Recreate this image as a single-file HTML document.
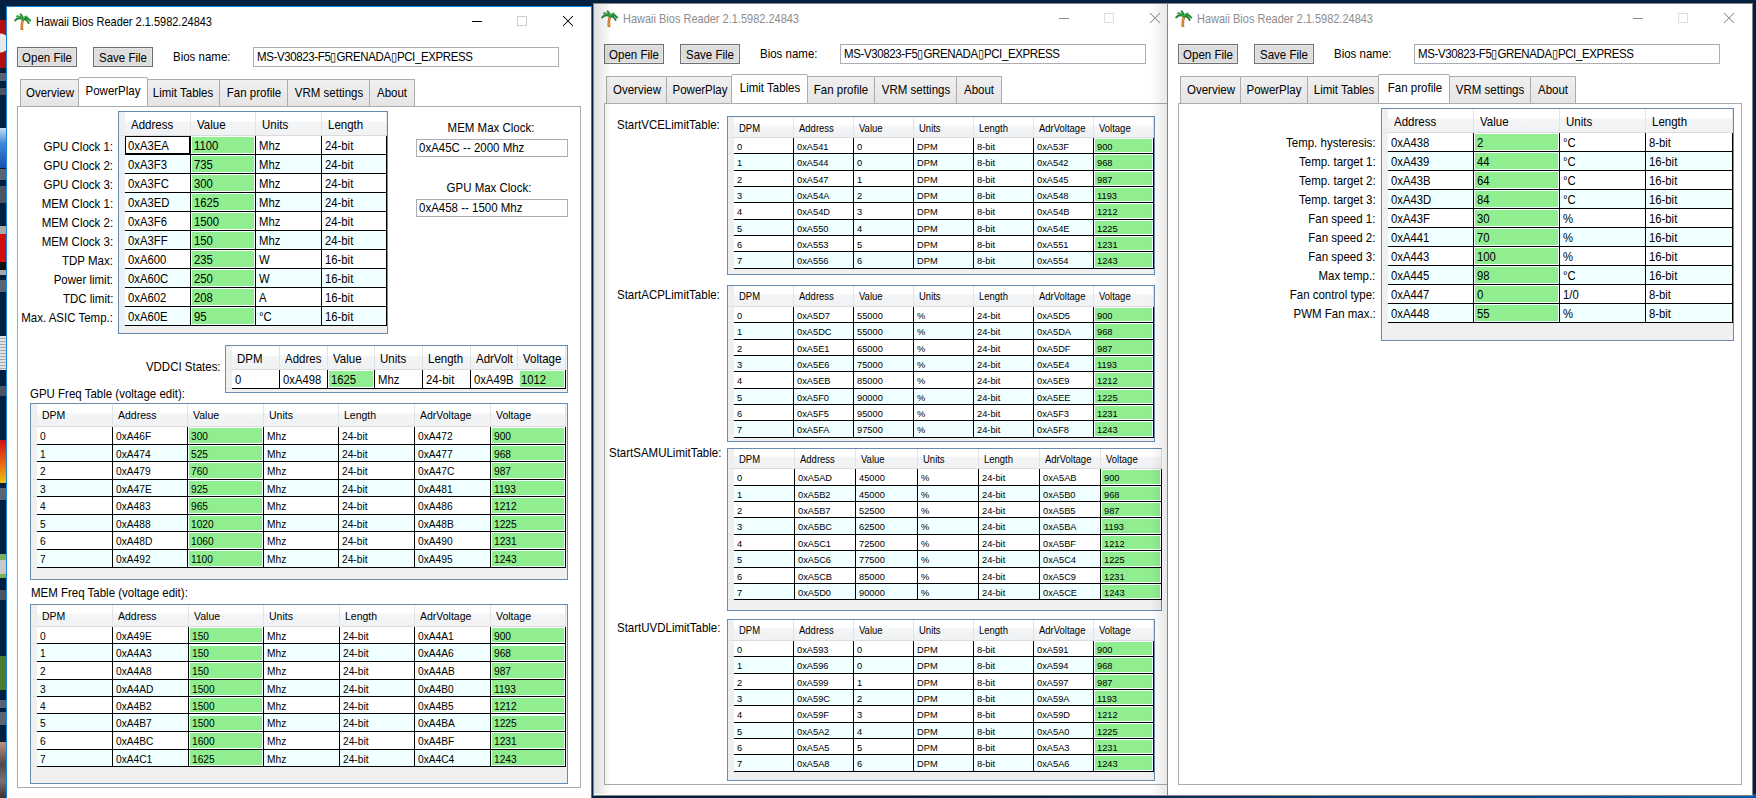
<!DOCTYPE html><html><head><meta charset="utf-8"><style>
html,body{margin:0;padding:0;width:1756px;height:798px;overflow:hidden;background:#0A1A33}
body{position:relative;font-family:"Liberation Sans",sans-serif}
div{position:absolute}
.t{white-space:pre;line-height:1.15;color:#000}
</style></head><body>
<div style="left:0;top:0;width:1756px;height:798px;background:#03203F"></div>
<div style="left:0;top:794px;width:1756px;height:4px;background:linear-gradient(90deg,#031A33 0%,#04244A 60%,#0A5AA8 100%)"></div>
<div style="left:0;top:20px;width:6px;height:48px;background:#B01010"></div>
<div style="left:0;top:30px;width:6px;height:26px;background:radial-gradient(circle at 0 50%,#E8E8E8 0,#E8E8E8 9px,#B01010 10px)"></div>
<div style="left:0;top:73px;width:6px;height:8px;background:#5A6472"></div>
<div style="left:0;top:88px;width:6px;height:7px;background:#4A5462"></div>
<div style="left:0;top:128px;width:6px;height:40px;background:linear-gradient(#C8DDF0,#3F86D8 40%,#1A4FB0)"></div>
<div style="left:0;top:169px;width:6px;height:11px;background:#5A6472"></div>
<div style="left:0;top:186px;width:6px;height:17px;background:#4A5462"></div>
<div style="left:0;top:226px;width:6px;height:49px;background:#A8A8A8"></div>
<div style="left:0;top:234px;width:6px;height:28px;background:#D01010"></div>
<div style="left:0;top:262px;width:6px;height:8px;background:#101010"></div>
<div style="left:0;top:280px;width:6px;height:12px;background:#5A6472"></div>
<div style="left:0;top:336px;width:6px;height:34px;background:repeating-linear-gradient(#E0E0E0 0px,#E0E0E0 2px,#A8A8A8 2px,#A8A8A8 3px)"></div>
<div style="left:0;top:386px;width:6px;height:10px;background:#4A5462"></div>
<div style="left:0;top:440px;width:6px;height:43px;background:linear-gradient(#D01010,#E86010 50%,#F0C010)"></div>
<div style="left:0;top:488px;width:6px;height:12px;background:#5A6472"></div>
<div style="left:0;top:554px;width:6px;height:24px;background:#7CB060"></div>
<div style="left:0;top:560px;width:6px;height:14px;background:#C8C8C8"></div>
<div style="left:0;top:590px;width:6px;height:10px;background:#4A5462"></div>
<div style="left:0;top:656px;width:6px;height:34px;background:#4C7A30"></div>
<div style="left:0;top:700px;width:6px;height:8px;background:#5A6472"></div>
<div style="left:0;top:712px;width:6px;height:13px;background:#5A6472"></div>
<div style="left:0;top:742px;width:6px;height:56px;background:linear-gradient(#C09080,#504848 40%,#7A7070 70%,#3A3030)"></div>
<div style="left:593px;top:3px;width:586px;height:793px;background:#fff;border:1px solid #858585;box-sizing:border-box"></div>
<div style="left:601px;top:10px;width:18px;height:18px"><svg style="display:block" width="18" height="18" viewBox="0 0 18 18"><path d="M7.6 7 C6.6 9.8 6.3 13.2 6.6 17 L9.4 17 C8.9 13.5 9 10 10.3 7 Z" fill="#C9641A"/><path d="M8.6 7.6 C7.9 10.3 7.7 13.5 7.9 16.6" stroke="#F2A646" stroke-width="1" fill="none"/><g fill="none" stroke-linecap="round"><path d="M8.8 6.2 Q4 3.6 1.3 7.4" stroke="#1F8A34" stroke-width="2"/><path d="M8.6 5.8 Q5.5 2.4 2.8 3.3" stroke="#3DA64E" stroke-width="1.8"/><path d="M8.9 6 Q8.3 2.6 6.6 1.3" stroke="#228C36" stroke-width="1.9"/><path d="M9 6 Q12.6 3.2 16.2 7.6" stroke="#1F8A34" stroke-width="2"/><path d="M9.2 6.4 Q13 6 14.6 10" stroke="#1A7F2E" stroke-width="1.9"/><path d="M9 6 Q11 3 13 3.4" stroke="#45AE55" stroke-width="1.5"/></g></svg></div>
<div class="t" style="left:623.4px;top:11.67px;font-size:12.4px;color:#8C8C8C;transform:scaleX(0.887);transform-origin:0 0;">Hawaii Bios Reader 2.1.5982.24843</div>
<div style="left:1059px;top:18px;width:10px;height:1px;background:#8C8C8C"></div>
<div style="left:1104px;top:13px;width:10px;height:10px;border:1px solid #DDDDDD;box-sizing:border-box"></div>
<div style="left:1149px;top:12px;width:12px;height:12px"><svg style="display:block" width="12" height="12" viewBox="0 0 12 12"><path d="M1 1 L11 11 M11 1 L1 11" stroke="#8C8C8C" stroke-width="1.05" fill="none"/></svg></div>
<div style="left:604px;top:44px;width:60px;height:20px;background:#DDDDDD;border:1px solid #707070;box-sizing:border-box;box-shadow:inset 0 0 0 1px #E6E6E6"></div>
<div class="t" style="left:484.0px;width:300px;top:47.87px;font-size:12.4px;color:#000;text-align:center;transform:scaleX(0.927);transform-origin:50% 0">Open File</div>
<div style="left:680px;top:44px;width:60px;height:20px;background:#DDDDDD;border:1px solid #707070;box-sizing:border-box;box-shadow:inset 0 0 0 1px #E6E6E6"></div>
<div class="t" style="left:560.0px;width:300px;top:47.87px;font-size:12.4px;color:#000;text-align:center;transform:scaleX(0.927);transform-origin:50% 0">Save File</div>
<div class="t" style="left:759.6px;top:46.67px;font-size:12.4px;color:#000;transform:scaleX(0.927);transform-origin:0 0;">Bios name:</div>
<div style="left:840px;top:44px;width:306px;height:20px;border:1px solid #ABADB3;box-sizing:border-box;background:#fff"></div>
<div class="t" style="left:843.6px;top:46.67px;font-size:12.4px;color:#000;transform:scaleX(0.927);transform-origin:0 0;letter-spacing:-0.4px">MS-V30823-F5▯GRENADA▯PCI_EXPRESS</div>
<div style="left:604px;top:103px;width:564px;height:682px;border:1px solid #ACACAC;box-sizing:border-box;background:#fff"></div>
<div style="left:606px;top:76px;width:62px;height:28px;background:linear-gradient(#F0F0F0,#E5E5E5);border:1px solid #ACACAC;box-sizing:border-box"></div>
<div class="t" style="left:487.0px;width:300px;top:82.87px;font-size:12.4px;color:#000;text-align:center;transform:scaleX(0.927);transform-origin:50% 0">Overview</div>
<div style="left:666px;top:76px;width:68px;height:28px;background:linear-gradient(#F0F0F0,#E5E5E5);border:1px solid #ACACAC;box-sizing:border-box"></div>
<div class="t" style="left:550.2px;width:300px;top:82.87px;font-size:12.4px;color:#000;text-align:center;transform:scaleX(0.927);transform-origin:50% 0">PowerPlay</div>
<div style="left:806px;top:76px;width:69px;height:28px;background:linear-gradient(#F0F0F0,#E5E5E5);border:1px solid #ACACAC;box-sizing:border-box"></div>
<div class="t" style="left:690.5px;width:300px;top:82.87px;font-size:12.4px;color:#000;text-align:center;transform:scaleX(0.927);transform-origin:50% 0">Fan profile</div>
<div style="left:874px;top:76px;width:83px;height:28px;background:linear-gradient(#F0F0F0,#E5E5E5);border:1px solid #ACACAC;box-sizing:border-box"></div>
<div class="t" style="left:765.5px;width:300px;top:82.87px;font-size:12.4px;color:#000;text-align:center;transform:scaleX(0.927);transform-origin:50% 0">VRM settings</div>
<div style="left:956px;top:76px;width:46px;height:28px;background:linear-gradient(#F0F0F0,#E5E5E5);border:1px solid #ACACAC;box-sizing:border-box"></div>
<div class="t" style="left:829.0px;width:300px;top:82.87px;font-size:12.4px;color:#000;text-align:center;transform:scaleX(0.927);transform-origin:50% 0">About</div>
<div style="left:731px;top:74px;width:77px;height:30px;background:#fff;border:1px solid #ACACAC;border-radius:2px 2px 0 0;box-sizing:border-box"></div>
<div class="t" style="left:620.0px;width:300px;top:80.87px;font-size:12.4px;color:#000;text-align:center;transform:scaleX(0.927);transform-origin:50% 0">Limit Tables</div>
<div class="t" style="left:616.9px;top:117.77px;font-size:12.4px;color:#000;transform:scaleX(0.927);transform-origin:0 0;">StartVCELimitTable:</div>
<div style="left:727px;top:116px;width:428px;height:159px;border:1px solid #688CAF;box-sizing:border-box;background:#F0F0F0"></div>
<div style="left:728px;top:118px;width:6px;height:20px;background:#EFEFEF;border-bottom:1px solid #E4E4E4;box-sizing:border-box"></div>
<div style="left:734px;top:118px;width:60px;height:20px;background:linear-gradient(#FFFFFF 0%,#FFFFFF 38%,#F4F5F7 44%,#F0F1F3 100%);border-right:1px solid #E2E3E5;border-bottom:1px solid #DADBDD;box-sizing:border-box;overflow:hidden"></div>
<div style="left:794px;top:118px;width:60px;height:20px;background:linear-gradient(#FFFFFF 0%,#FFFFFF 38%,#F4F5F7 44%,#F0F1F3 100%);border-right:1px solid #E2E3E5;border-bottom:1px solid #DADBDD;box-sizing:border-box;overflow:hidden"></div>
<div style="left:854px;top:118px;width:60px;height:20px;background:linear-gradient(#FFFFFF 0%,#FFFFFF 38%,#F4F5F7 44%,#F0F1F3 100%);border-right:1px solid #E2E3E5;border-bottom:1px solid #DADBDD;box-sizing:border-box;overflow:hidden"></div>
<div style="left:914px;top:118px;width:60px;height:20px;background:linear-gradient(#FFFFFF 0%,#FFFFFF 38%,#F4F5F7 44%,#F0F1F3 100%);border-right:1px solid #E2E3E5;border-bottom:1px solid #DADBDD;box-sizing:border-box;overflow:hidden"></div>
<div style="left:974px;top:118px;width:60px;height:20px;background:linear-gradient(#FFFFFF 0%,#FFFFFF 38%,#F4F5F7 44%,#F0F1F3 100%);border-right:1px solid #E2E3E5;border-bottom:1px solid #DADBDD;box-sizing:border-box;overflow:hidden"></div>
<div style="left:1034px;top:118px;width:60px;height:20px;background:linear-gradient(#FFFFFF 0%,#FFFFFF 38%,#F4F5F7 44%,#F0F1F3 100%);border-right:1px solid #E2E3E5;border-bottom:1px solid #DADBDD;box-sizing:border-box;overflow:hidden"></div>
<div style="left:1094px;top:118px;width:60px;height:20px;background:linear-gradient(#FFFFFF 0%,#FFFFFF 38%,#F4F5F7 44%,#F0F1F3 100%);border-right:1px solid #E2E3E5;border-bottom:1px solid #DADBDD;box-sizing:border-box;overflow:hidden"></div>
<div style="left:734px;top:118px;width:59px;height:20px;overflow:hidden">
<div class="t" style="left:5px;top:4.59px;font-size:10.1px;transform:scaleX(0.94);transform-origin:0 0">DPM</div></div>
<div style="left:794px;top:118px;width:59px;height:20px;overflow:hidden">
<div class="t" style="left:5px;top:4.59px;font-size:10.1px;transform:scaleX(0.94);transform-origin:0 0">Address</div></div>
<div style="left:854px;top:118px;width:59px;height:20px;overflow:hidden">
<div class="t" style="left:5px;top:4.59px;font-size:10.1px;transform:scaleX(0.94);transform-origin:0 0">Value</div></div>
<div style="left:914px;top:118px;width:59px;height:20px;overflow:hidden">
<div class="t" style="left:5px;top:4.59px;font-size:10.1px;transform:scaleX(0.94);transform-origin:0 0">Units</div></div>
<div style="left:974px;top:118px;width:59px;height:20px;overflow:hidden">
<div class="t" style="left:5px;top:4.59px;font-size:10.1px;transform:scaleX(0.94);transform-origin:0 0">Length</div></div>
<div style="left:1034px;top:118px;width:59px;height:20px;overflow:hidden">
<div class="t" style="left:5px;top:4.59px;font-size:10.1px;transform:scaleX(0.94);transform-origin:0 0">AdrVoltage</div></div>
<div style="left:1094px;top:118px;width:59px;height:20px;overflow:hidden">
<div class="t" style="left:5px;top:4.59px;font-size:10.1px;transform:scaleX(0.94);transform-origin:0 0">Voltage</div></div>
<div style="left:728px;top:138px;width:6px;height:16px;background:#F0F0F0;border-bottom:1px solid #E4E4E4;box-sizing:border-box"></div>
<div style="left:734px;top:138px;width:420px;height:16px;background:#FFFFFF;border-bottom:1px solid #000;box-sizing:border-box"></div>
<div style="left:793px;top:138px;width:1px;height:16px;background:#000"></div>
<div class="t" style="left:737px;top:141.07px;font-size:9.9px;transform:scaleX(0.94);transform-origin:0 0">0</div>
<div style="left:853px;top:138px;width:1px;height:16px;background:#000"></div>
<div class="t" style="left:797px;top:141.07px;font-size:9.9px;transform:scaleX(0.94);transform-origin:0 0">0xA541</div>
<div style="left:913px;top:138px;width:1px;height:16px;background:#000"></div>
<div class="t" style="left:857px;top:141.07px;font-size:9.9px;transform:scaleX(0.94);transform-origin:0 0">0</div>
<div style="left:973px;top:138px;width:1px;height:16px;background:#000"></div>
<div class="t" style="left:917px;top:141.07px;font-size:9.9px;transform:scaleX(0.94);transform-origin:0 0">DPM</div>
<div style="left:1033px;top:138px;width:1px;height:16px;background:#000"></div>
<div class="t" style="left:977px;top:141.07px;font-size:9.9px;transform:scaleX(0.94);transform-origin:0 0">8-bit</div>
<div style="left:1093px;top:138px;width:1px;height:16px;background:#000"></div>
<div class="t" style="left:1037px;top:141.07px;font-size:9.9px;transform:scaleX(0.94);transform-origin:0 0">0xA53F</div>
<div style="left:1153px;top:138px;width:1px;height:16px;background:#000"></div>
<div style="left:1095px;top:139px;width:57px;height:13px;background:#90EE90"></div>
<div class="t" style="left:1097px;top:141.07px;font-size:9.9px;transform:scaleX(0.94);transform-origin:0 0">900</div>
<div style="left:728px;top:154px;width:6px;height:17px;background:#F0F0F0;border-bottom:1px solid #E4E4E4;box-sizing:border-box"></div>
<div style="left:734px;top:154px;width:420px;height:17px;background:#F0FFFF;border-bottom:1px solid #000;box-sizing:border-box"></div>
<div style="left:793px;top:154px;width:1px;height:17px;background:#000"></div>
<div class="t" style="left:737px;top:157.07px;font-size:9.9px;transform:scaleX(0.94);transform-origin:0 0">1</div>
<div style="left:853px;top:154px;width:1px;height:17px;background:#000"></div>
<div class="t" style="left:797px;top:157.07px;font-size:9.9px;transform:scaleX(0.94);transform-origin:0 0">0xA544</div>
<div style="left:913px;top:154px;width:1px;height:17px;background:#000"></div>
<div class="t" style="left:857px;top:157.07px;font-size:9.9px;transform:scaleX(0.94);transform-origin:0 0">0</div>
<div style="left:973px;top:154px;width:1px;height:17px;background:#000"></div>
<div class="t" style="left:917px;top:157.07px;font-size:9.9px;transform:scaleX(0.94);transform-origin:0 0">DPM</div>
<div style="left:1033px;top:154px;width:1px;height:17px;background:#000"></div>
<div class="t" style="left:977px;top:157.07px;font-size:9.9px;transform:scaleX(0.94);transform-origin:0 0">8-bit</div>
<div style="left:1093px;top:154px;width:1px;height:17px;background:#000"></div>
<div class="t" style="left:1037px;top:157.07px;font-size:9.9px;transform:scaleX(0.94);transform-origin:0 0">0xA542</div>
<div style="left:1153px;top:154px;width:1px;height:17px;background:#000"></div>
<div style="left:1095px;top:155px;width:57px;height:14px;background:#90EE90"></div>
<div class="t" style="left:1097px;top:157.07px;font-size:9.9px;transform:scaleX(0.94);transform-origin:0 0">968</div>
<div style="left:728px;top:171px;width:6px;height:16px;background:#F0F0F0;border-bottom:1px solid #E4E4E4;box-sizing:border-box"></div>
<div style="left:734px;top:171px;width:420px;height:16px;background:#FFFFFF;border-bottom:1px solid #000;box-sizing:border-box"></div>
<div style="left:793px;top:171px;width:1px;height:16px;background:#000"></div>
<div class="t" style="left:737px;top:174.07px;font-size:9.9px;transform:scaleX(0.94);transform-origin:0 0">2</div>
<div style="left:853px;top:171px;width:1px;height:16px;background:#000"></div>
<div class="t" style="left:797px;top:174.07px;font-size:9.9px;transform:scaleX(0.94);transform-origin:0 0">0xA547</div>
<div style="left:913px;top:171px;width:1px;height:16px;background:#000"></div>
<div class="t" style="left:857px;top:174.07px;font-size:9.9px;transform:scaleX(0.94);transform-origin:0 0">1</div>
<div style="left:973px;top:171px;width:1px;height:16px;background:#000"></div>
<div class="t" style="left:917px;top:174.07px;font-size:9.9px;transform:scaleX(0.94);transform-origin:0 0">DPM</div>
<div style="left:1033px;top:171px;width:1px;height:16px;background:#000"></div>
<div class="t" style="left:977px;top:174.07px;font-size:9.9px;transform:scaleX(0.94);transform-origin:0 0">8-bit</div>
<div style="left:1093px;top:171px;width:1px;height:16px;background:#000"></div>
<div class="t" style="left:1037px;top:174.07px;font-size:9.9px;transform:scaleX(0.94);transform-origin:0 0">0xA545</div>
<div style="left:1153px;top:171px;width:1px;height:16px;background:#000"></div>
<div style="left:1095px;top:172px;width:57px;height:13px;background:#90EE90"></div>
<div class="t" style="left:1097px;top:174.07px;font-size:9.9px;transform:scaleX(0.94);transform-origin:0 0">987</div>
<div style="left:728px;top:187px;width:6px;height:16px;background:#F0F0F0;border-bottom:1px solid #E4E4E4;box-sizing:border-box"></div>
<div style="left:734px;top:187px;width:420px;height:16px;background:#F0FFFF;border-bottom:1px solid #000;box-sizing:border-box"></div>
<div style="left:793px;top:187px;width:1px;height:16px;background:#000"></div>
<div class="t" style="left:737px;top:190.07px;font-size:9.9px;transform:scaleX(0.94);transform-origin:0 0">3</div>
<div style="left:853px;top:187px;width:1px;height:16px;background:#000"></div>
<div class="t" style="left:797px;top:190.07px;font-size:9.9px;transform:scaleX(0.94);transform-origin:0 0">0xA54A</div>
<div style="left:913px;top:187px;width:1px;height:16px;background:#000"></div>
<div class="t" style="left:857px;top:190.07px;font-size:9.9px;transform:scaleX(0.94);transform-origin:0 0">2</div>
<div style="left:973px;top:187px;width:1px;height:16px;background:#000"></div>
<div class="t" style="left:917px;top:190.07px;font-size:9.9px;transform:scaleX(0.94);transform-origin:0 0">DPM</div>
<div style="left:1033px;top:187px;width:1px;height:16px;background:#000"></div>
<div class="t" style="left:977px;top:190.07px;font-size:9.9px;transform:scaleX(0.94);transform-origin:0 0">8-bit</div>
<div style="left:1093px;top:187px;width:1px;height:16px;background:#000"></div>
<div class="t" style="left:1037px;top:190.07px;font-size:9.9px;transform:scaleX(0.94);transform-origin:0 0">0xA548</div>
<div style="left:1153px;top:187px;width:1px;height:16px;background:#000"></div>
<div style="left:1095px;top:188px;width:57px;height:13px;background:#90EE90"></div>
<div class="t" style="left:1097px;top:190.07px;font-size:9.9px;transform:scaleX(0.94);transform-origin:0 0">1193</div>
<div style="left:728px;top:203px;width:6px;height:17px;background:#F0F0F0;border-bottom:1px solid #E4E4E4;box-sizing:border-box"></div>
<div style="left:734px;top:203px;width:420px;height:17px;background:#FFFFFF;border-bottom:1px solid #000;box-sizing:border-box"></div>
<div style="left:793px;top:203px;width:1px;height:17px;background:#000"></div>
<div class="t" style="left:737px;top:206.07px;font-size:9.9px;transform:scaleX(0.94);transform-origin:0 0">4</div>
<div style="left:853px;top:203px;width:1px;height:17px;background:#000"></div>
<div class="t" style="left:797px;top:206.07px;font-size:9.9px;transform:scaleX(0.94);transform-origin:0 0">0xA54D</div>
<div style="left:913px;top:203px;width:1px;height:17px;background:#000"></div>
<div class="t" style="left:857px;top:206.07px;font-size:9.9px;transform:scaleX(0.94);transform-origin:0 0">3</div>
<div style="left:973px;top:203px;width:1px;height:17px;background:#000"></div>
<div class="t" style="left:917px;top:206.07px;font-size:9.9px;transform:scaleX(0.94);transform-origin:0 0">DPM</div>
<div style="left:1033px;top:203px;width:1px;height:17px;background:#000"></div>
<div class="t" style="left:977px;top:206.07px;font-size:9.9px;transform:scaleX(0.94);transform-origin:0 0">8-bit</div>
<div style="left:1093px;top:203px;width:1px;height:17px;background:#000"></div>
<div class="t" style="left:1037px;top:206.07px;font-size:9.9px;transform:scaleX(0.94);transform-origin:0 0">0xA54B</div>
<div style="left:1153px;top:203px;width:1px;height:17px;background:#000"></div>
<div style="left:1095px;top:204px;width:57px;height:14px;background:#90EE90"></div>
<div class="t" style="left:1097px;top:206.07px;font-size:9.9px;transform:scaleX(0.94);transform-origin:0 0">1212</div>
<div style="left:728px;top:220px;width:6px;height:16px;background:#F0F0F0;border-bottom:1px solid #E4E4E4;box-sizing:border-box"></div>
<div style="left:734px;top:220px;width:420px;height:16px;background:#F0FFFF;border-bottom:1px solid #000;box-sizing:border-box"></div>
<div style="left:793px;top:220px;width:1px;height:16px;background:#000"></div>
<div class="t" style="left:737px;top:223.07px;font-size:9.9px;transform:scaleX(0.94);transform-origin:0 0">5</div>
<div style="left:853px;top:220px;width:1px;height:16px;background:#000"></div>
<div class="t" style="left:797px;top:223.07px;font-size:9.9px;transform:scaleX(0.94);transform-origin:0 0">0xA550</div>
<div style="left:913px;top:220px;width:1px;height:16px;background:#000"></div>
<div class="t" style="left:857px;top:223.07px;font-size:9.9px;transform:scaleX(0.94);transform-origin:0 0">4</div>
<div style="left:973px;top:220px;width:1px;height:16px;background:#000"></div>
<div class="t" style="left:917px;top:223.07px;font-size:9.9px;transform:scaleX(0.94);transform-origin:0 0">DPM</div>
<div style="left:1033px;top:220px;width:1px;height:16px;background:#000"></div>
<div class="t" style="left:977px;top:223.07px;font-size:9.9px;transform:scaleX(0.94);transform-origin:0 0">8-bit</div>
<div style="left:1093px;top:220px;width:1px;height:16px;background:#000"></div>
<div class="t" style="left:1037px;top:223.07px;font-size:9.9px;transform:scaleX(0.94);transform-origin:0 0">0xA54E</div>
<div style="left:1153px;top:220px;width:1px;height:16px;background:#000"></div>
<div style="left:1095px;top:221px;width:57px;height:13px;background:#90EE90"></div>
<div class="t" style="left:1097px;top:223.07px;font-size:9.9px;transform:scaleX(0.94);transform-origin:0 0">1225</div>
<div style="left:728px;top:236px;width:6px;height:16px;background:#F0F0F0;border-bottom:1px solid #E4E4E4;box-sizing:border-box"></div>
<div style="left:734px;top:236px;width:420px;height:16px;background:#FFFFFF;border-bottom:1px solid #000;box-sizing:border-box"></div>
<div style="left:793px;top:236px;width:1px;height:16px;background:#000"></div>
<div class="t" style="left:737px;top:239.07px;font-size:9.9px;transform:scaleX(0.94);transform-origin:0 0">6</div>
<div style="left:853px;top:236px;width:1px;height:16px;background:#000"></div>
<div class="t" style="left:797px;top:239.07px;font-size:9.9px;transform:scaleX(0.94);transform-origin:0 0">0xA553</div>
<div style="left:913px;top:236px;width:1px;height:16px;background:#000"></div>
<div class="t" style="left:857px;top:239.07px;font-size:9.9px;transform:scaleX(0.94);transform-origin:0 0">5</div>
<div style="left:973px;top:236px;width:1px;height:16px;background:#000"></div>
<div class="t" style="left:917px;top:239.07px;font-size:9.9px;transform:scaleX(0.94);transform-origin:0 0">DPM</div>
<div style="left:1033px;top:236px;width:1px;height:16px;background:#000"></div>
<div class="t" style="left:977px;top:239.07px;font-size:9.9px;transform:scaleX(0.94);transform-origin:0 0">8-bit</div>
<div style="left:1093px;top:236px;width:1px;height:16px;background:#000"></div>
<div class="t" style="left:1037px;top:239.07px;font-size:9.9px;transform:scaleX(0.94);transform-origin:0 0">0xA551</div>
<div style="left:1153px;top:236px;width:1px;height:16px;background:#000"></div>
<div style="left:1095px;top:237px;width:57px;height:13px;background:#90EE90"></div>
<div class="t" style="left:1097px;top:239.07px;font-size:9.9px;transform:scaleX(0.94);transform-origin:0 0">1231</div>
<div style="left:728px;top:252px;width:6px;height:17px;background:#F0F0F0;border-bottom:1px solid #E4E4E4;box-sizing:border-box"></div>
<div style="left:734px;top:252px;width:420px;height:17px;background:#F0FFFF;border-bottom:1px solid #000;box-sizing:border-box"></div>
<div style="left:793px;top:252px;width:1px;height:17px;background:#000"></div>
<div class="t" style="left:737px;top:255.07px;font-size:9.9px;transform:scaleX(0.94);transform-origin:0 0">7</div>
<div style="left:853px;top:252px;width:1px;height:17px;background:#000"></div>
<div class="t" style="left:797px;top:255.07px;font-size:9.9px;transform:scaleX(0.94);transform-origin:0 0">0xA556</div>
<div style="left:913px;top:252px;width:1px;height:17px;background:#000"></div>
<div class="t" style="left:857px;top:255.07px;font-size:9.9px;transform:scaleX(0.94);transform-origin:0 0">6</div>
<div style="left:973px;top:252px;width:1px;height:17px;background:#000"></div>
<div class="t" style="left:917px;top:255.07px;font-size:9.9px;transform:scaleX(0.94);transform-origin:0 0">DPM</div>
<div style="left:1033px;top:252px;width:1px;height:17px;background:#000"></div>
<div class="t" style="left:977px;top:255.07px;font-size:9.9px;transform:scaleX(0.94);transform-origin:0 0">8-bit</div>
<div style="left:1093px;top:252px;width:1px;height:17px;background:#000"></div>
<div class="t" style="left:1037px;top:255.07px;font-size:9.9px;transform:scaleX(0.94);transform-origin:0 0">0xA554</div>
<div style="left:1153px;top:252px;width:1px;height:17px;background:#000"></div>
<div style="left:1095px;top:253px;width:57px;height:14px;background:#90EE90"></div>
<div class="t" style="left:1097px;top:255.07px;font-size:9.9px;transform:scaleX(0.94);transform-origin:0 0">1243</div>
<div class="t" style="left:616.9px;top:287.77px;font-size:12.4px;color:#000;transform:scaleX(0.927);transform-origin:0 0;">StartACPLimitTable:</div>
<div style="left:727px;top:285px;width:428px;height:157px;border:1px solid #688CAF;box-sizing:border-box;background:#F0F0F0"></div>
<div style="left:728px;top:286px;width:6px;height:21px;background:#EFEFEF;border-bottom:1px solid #E4E4E4;box-sizing:border-box"></div>
<div style="left:734px;top:286px;width:60px;height:21px;background:linear-gradient(#FFFFFF 0%,#FFFFFF 38%,#F4F5F7 44%,#F0F1F3 100%);border-right:1px solid #E2E3E5;border-bottom:1px solid #DADBDD;box-sizing:border-box;overflow:hidden"></div>
<div style="left:794px;top:286px;width:60px;height:21px;background:linear-gradient(#FFFFFF 0%,#FFFFFF 38%,#F4F5F7 44%,#F0F1F3 100%);border-right:1px solid #E2E3E5;border-bottom:1px solid #DADBDD;box-sizing:border-box;overflow:hidden"></div>
<div style="left:854px;top:286px;width:60px;height:21px;background:linear-gradient(#FFFFFF 0%,#FFFFFF 38%,#F4F5F7 44%,#F0F1F3 100%);border-right:1px solid #E2E3E5;border-bottom:1px solid #DADBDD;box-sizing:border-box;overflow:hidden"></div>
<div style="left:914px;top:286px;width:60px;height:21px;background:linear-gradient(#FFFFFF 0%,#FFFFFF 38%,#F4F5F7 44%,#F0F1F3 100%);border-right:1px solid #E2E3E5;border-bottom:1px solid #DADBDD;box-sizing:border-box;overflow:hidden"></div>
<div style="left:974px;top:286px;width:60px;height:21px;background:linear-gradient(#FFFFFF 0%,#FFFFFF 38%,#F4F5F7 44%,#F0F1F3 100%);border-right:1px solid #E2E3E5;border-bottom:1px solid #DADBDD;box-sizing:border-box;overflow:hidden"></div>
<div style="left:1034px;top:286px;width:60px;height:21px;background:linear-gradient(#FFFFFF 0%,#FFFFFF 38%,#F4F5F7 44%,#F0F1F3 100%);border-right:1px solid #E2E3E5;border-bottom:1px solid #DADBDD;box-sizing:border-box;overflow:hidden"></div>
<div style="left:1094px;top:286px;width:60px;height:21px;background:linear-gradient(#FFFFFF 0%,#FFFFFF 38%,#F4F5F7 44%,#F0F1F3 100%);border-right:1px solid #E2E3E5;border-bottom:1px solid #DADBDD;box-sizing:border-box;overflow:hidden"></div>
<div style="left:734px;top:286px;width:59px;height:20px;overflow:hidden">
<div class="t" style="left:5px;top:4.59px;font-size:10.1px;transform:scaleX(0.94);transform-origin:0 0">DPM</div></div>
<div style="left:794px;top:286px;width:59px;height:20px;overflow:hidden">
<div class="t" style="left:5px;top:4.59px;font-size:10.1px;transform:scaleX(0.94);transform-origin:0 0">Address</div></div>
<div style="left:854px;top:286px;width:59px;height:20px;overflow:hidden">
<div class="t" style="left:5px;top:4.59px;font-size:10.1px;transform:scaleX(0.94);transform-origin:0 0">Value</div></div>
<div style="left:914px;top:286px;width:59px;height:20px;overflow:hidden">
<div class="t" style="left:5px;top:4.59px;font-size:10.1px;transform:scaleX(0.94);transform-origin:0 0">Units</div></div>
<div style="left:974px;top:286px;width:59px;height:20px;overflow:hidden">
<div class="t" style="left:5px;top:4.59px;font-size:10.1px;transform:scaleX(0.94);transform-origin:0 0">Length</div></div>
<div style="left:1034px;top:286px;width:59px;height:20px;overflow:hidden">
<div class="t" style="left:5px;top:4.59px;font-size:10.1px;transform:scaleX(0.94);transform-origin:0 0">AdrVoltage</div></div>
<div style="left:1094px;top:286px;width:59px;height:20px;overflow:hidden">
<div class="t" style="left:5px;top:4.59px;font-size:10.1px;transform:scaleX(0.94);transform-origin:0 0">Voltage</div></div>
<div style="left:728px;top:307px;width:6px;height:16px;background:#F0F0F0;border-bottom:1px solid #E4E4E4;box-sizing:border-box"></div>
<div style="left:734px;top:307px;width:420px;height:16px;background:#FFFFFF;border-bottom:1px solid #000;box-sizing:border-box"></div>
<div style="left:793px;top:307px;width:1px;height:16px;background:#000"></div>
<div class="t" style="left:737px;top:310.07px;font-size:9.9px;transform:scaleX(0.94);transform-origin:0 0">0</div>
<div style="left:853px;top:307px;width:1px;height:16px;background:#000"></div>
<div class="t" style="left:797px;top:310.07px;font-size:9.9px;transform:scaleX(0.94);transform-origin:0 0">0xA5D7</div>
<div style="left:913px;top:307px;width:1px;height:16px;background:#000"></div>
<div class="t" style="left:857px;top:310.07px;font-size:9.9px;transform:scaleX(0.94);transform-origin:0 0">55000</div>
<div style="left:973px;top:307px;width:1px;height:16px;background:#000"></div>
<div class="t" style="left:917px;top:310.07px;font-size:9.9px;transform:scaleX(0.94);transform-origin:0 0">%</div>
<div style="left:1033px;top:307px;width:1px;height:16px;background:#000"></div>
<div class="t" style="left:977px;top:310.07px;font-size:9.9px;transform:scaleX(0.94);transform-origin:0 0">24-bit</div>
<div style="left:1093px;top:307px;width:1px;height:16px;background:#000"></div>
<div class="t" style="left:1037px;top:310.07px;font-size:9.9px;transform:scaleX(0.94);transform-origin:0 0">0xA5D5</div>
<div style="left:1153px;top:307px;width:1px;height:16px;background:#000"></div>
<div style="left:1095px;top:308px;width:57px;height:13px;background:#90EE90"></div>
<div class="t" style="left:1097px;top:310.07px;font-size:9.9px;transform:scaleX(0.94);transform-origin:0 0">900</div>
<div style="left:728px;top:323px;width:6px;height:17px;background:#F0F0F0;border-bottom:1px solid #E4E4E4;box-sizing:border-box"></div>
<div style="left:734px;top:323px;width:420px;height:17px;background:#F0FFFF;border-bottom:1px solid #000;box-sizing:border-box"></div>
<div style="left:793px;top:323px;width:1px;height:17px;background:#000"></div>
<div class="t" style="left:737px;top:326.07px;font-size:9.9px;transform:scaleX(0.94);transform-origin:0 0">1</div>
<div style="left:853px;top:323px;width:1px;height:17px;background:#000"></div>
<div class="t" style="left:797px;top:326.07px;font-size:9.9px;transform:scaleX(0.94);transform-origin:0 0">0xA5DC</div>
<div style="left:913px;top:323px;width:1px;height:17px;background:#000"></div>
<div class="t" style="left:857px;top:326.07px;font-size:9.9px;transform:scaleX(0.94);transform-origin:0 0">55000</div>
<div style="left:973px;top:323px;width:1px;height:17px;background:#000"></div>
<div class="t" style="left:917px;top:326.07px;font-size:9.9px;transform:scaleX(0.94);transform-origin:0 0">%</div>
<div style="left:1033px;top:323px;width:1px;height:17px;background:#000"></div>
<div class="t" style="left:977px;top:326.07px;font-size:9.9px;transform:scaleX(0.94);transform-origin:0 0">24-bit</div>
<div style="left:1093px;top:323px;width:1px;height:17px;background:#000"></div>
<div class="t" style="left:1037px;top:326.07px;font-size:9.9px;transform:scaleX(0.94);transform-origin:0 0">0xA5DA</div>
<div style="left:1153px;top:323px;width:1px;height:17px;background:#000"></div>
<div style="left:1095px;top:324px;width:57px;height:14px;background:#90EE90"></div>
<div class="t" style="left:1097px;top:326.07px;font-size:9.9px;transform:scaleX(0.94);transform-origin:0 0">968</div>
<div style="left:728px;top:340px;width:6px;height:16px;background:#F0F0F0;border-bottom:1px solid #E4E4E4;box-sizing:border-box"></div>
<div style="left:734px;top:340px;width:420px;height:16px;background:#FFFFFF;border-bottom:1px solid #000;box-sizing:border-box"></div>
<div style="left:793px;top:340px;width:1px;height:16px;background:#000"></div>
<div class="t" style="left:737px;top:343.07px;font-size:9.9px;transform:scaleX(0.94);transform-origin:0 0">2</div>
<div style="left:853px;top:340px;width:1px;height:16px;background:#000"></div>
<div class="t" style="left:797px;top:343.07px;font-size:9.9px;transform:scaleX(0.94);transform-origin:0 0">0xA5E1</div>
<div style="left:913px;top:340px;width:1px;height:16px;background:#000"></div>
<div class="t" style="left:857px;top:343.07px;font-size:9.9px;transform:scaleX(0.94);transform-origin:0 0">65000</div>
<div style="left:973px;top:340px;width:1px;height:16px;background:#000"></div>
<div class="t" style="left:917px;top:343.07px;font-size:9.9px;transform:scaleX(0.94);transform-origin:0 0">%</div>
<div style="left:1033px;top:340px;width:1px;height:16px;background:#000"></div>
<div class="t" style="left:977px;top:343.07px;font-size:9.9px;transform:scaleX(0.94);transform-origin:0 0">24-bit</div>
<div style="left:1093px;top:340px;width:1px;height:16px;background:#000"></div>
<div class="t" style="left:1037px;top:343.07px;font-size:9.9px;transform:scaleX(0.94);transform-origin:0 0">0xA5DF</div>
<div style="left:1153px;top:340px;width:1px;height:16px;background:#000"></div>
<div style="left:1095px;top:340px;width:57px;height:14px;background:#90EE90"></div>
<div class="t" style="left:1097px;top:343.07px;font-size:9.9px;transform:scaleX(0.94);transform-origin:0 0">987</div>
<div style="left:728px;top:356px;width:6px;height:16px;background:#F0F0F0;border-bottom:1px solid #E4E4E4;box-sizing:border-box"></div>
<div style="left:734px;top:356px;width:420px;height:16px;background:#F0FFFF;border-bottom:1px solid #000;box-sizing:border-box"></div>
<div style="left:793px;top:356px;width:1px;height:16px;background:#000"></div>
<div class="t" style="left:737px;top:359.07px;font-size:9.9px;transform:scaleX(0.94);transform-origin:0 0">3</div>
<div style="left:853px;top:356px;width:1px;height:16px;background:#000"></div>
<div class="t" style="left:797px;top:359.07px;font-size:9.9px;transform:scaleX(0.94);transform-origin:0 0">0xA5E6</div>
<div style="left:913px;top:356px;width:1px;height:16px;background:#000"></div>
<div class="t" style="left:857px;top:359.07px;font-size:9.9px;transform:scaleX(0.94);transform-origin:0 0">75000</div>
<div style="left:973px;top:356px;width:1px;height:16px;background:#000"></div>
<div class="t" style="left:917px;top:359.07px;font-size:9.9px;transform:scaleX(0.94);transform-origin:0 0">%</div>
<div style="left:1033px;top:356px;width:1px;height:16px;background:#000"></div>
<div class="t" style="left:977px;top:359.07px;font-size:9.9px;transform:scaleX(0.94);transform-origin:0 0">24-bit</div>
<div style="left:1093px;top:356px;width:1px;height:16px;background:#000"></div>
<div class="t" style="left:1037px;top:359.07px;font-size:9.9px;transform:scaleX(0.94);transform-origin:0 0">0xA5E4</div>
<div style="left:1153px;top:356px;width:1px;height:16px;background:#000"></div>
<div style="left:1095px;top:357px;width:57px;height:13px;background:#90EE90"></div>
<div class="t" style="left:1097px;top:359.07px;font-size:9.9px;transform:scaleX(0.94);transform-origin:0 0">1193</div>
<div style="left:728px;top:372px;width:6px;height:17px;background:#F0F0F0;border-bottom:1px solid #E4E4E4;box-sizing:border-box"></div>
<div style="left:734px;top:372px;width:420px;height:17px;background:#FFFFFF;border-bottom:1px solid #000;box-sizing:border-box"></div>
<div style="left:793px;top:372px;width:1px;height:17px;background:#000"></div>
<div class="t" style="left:737px;top:375.07px;font-size:9.9px;transform:scaleX(0.94);transform-origin:0 0">4</div>
<div style="left:853px;top:372px;width:1px;height:17px;background:#000"></div>
<div class="t" style="left:797px;top:375.07px;font-size:9.9px;transform:scaleX(0.94);transform-origin:0 0">0xA5EB</div>
<div style="left:913px;top:372px;width:1px;height:17px;background:#000"></div>
<div class="t" style="left:857px;top:375.07px;font-size:9.9px;transform:scaleX(0.94);transform-origin:0 0">85000</div>
<div style="left:973px;top:372px;width:1px;height:17px;background:#000"></div>
<div class="t" style="left:917px;top:375.07px;font-size:9.9px;transform:scaleX(0.94);transform-origin:0 0">%</div>
<div style="left:1033px;top:372px;width:1px;height:17px;background:#000"></div>
<div class="t" style="left:977px;top:375.07px;font-size:9.9px;transform:scaleX(0.94);transform-origin:0 0">24-bit</div>
<div style="left:1093px;top:372px;width:1px;height:17px;background:#000"></div>
<div class="t" style="left:1037px;top:375.07px;font-size:9.9px;transform:scaleX(0.94);transform-origin:0 0">0xA5E9</div>
<div style="left:1153px;top:372px;width:1px;height:17px;background:#000"></div>
<div style="left:1095px;top:373px;width:57px;height:14px;background:#90EE90"></div>
<div class="t" style="left:1097px;top:375.07px;font-size:9.9px;transform:scaleX(0.94);transform-origin:0 0">1212</div>
<div style="left:728px;top:389px;width:6px;height:16px;background:#F0F0F0;border-bottom:1px solid #E4E4E4;box-sizing:border-box"></div>
<div style="left:734px;top:389px;width:420px;height:16px;background:#F0FFFF;border-bottom:1px solid #000;box-sizing:border-box"></div>
<div style="left:793px;top:389px;width:1px;height:16px;background:#000"></div>
<div class="t" style="left:737px;top:392.07px;font-size:9.9px;transform:scaleX(0.94);transform-origin:0 0">5</div>
<div style="left:853px;top:389px;width:1px;height:16px;background:#000"></div>
<div class="t" style="left:797px;top:392.07px;font-size:9.9px;transform:scaleX(0.94);transform-origin:0 0">0xA5F0</div>
<div style="left:913px;top:389px;width:1px;height:16px;background:#000"></div>
<div class="t" style="left:857px;top:392.07px;font-size:9.9px;transform:scaleX(0.94);transform-origin:0 0">90000</div>
<div style="left:973px;top:389px;width:1px;height:16px;background:#000"></div>
<div class="t" style="left:917px;top:392.07px;font-size:9.9px;transform:scaleX(0.94);transform-origin:0 0">%</div>
<div style="left:1033px;top:389px;width:1px;height:16px;background:#000"></div>
<div class="t" style="left:977px;top:392.07px;font-size:9.9px;transform:scaleX(0.94);transform-origin:0 0">24-bit</div>
<div style="left:1093px;top:389px;width:1px;height:16px;background:#000"></div>
<div class="t" style="left:1037px;top:392.07px;font-size:9.9px;transform:scaleX(0.94);transform-origin:0 0">0xA5EE</div>
<div style="left:1153px;top:389px;width:1px;height:16px;background:#000"></div>
<div style="left:1095px;top:390px;width:57px;height:13px;background:#90EE90"></div>
<div class="t" style="left:1097px;top:392.07px;font-size:9.9px;transform:scaleX(0.94);transform-origin:0 0">1225</div>
<div style="left:728px;top:405px;width:6px;height:16px;background:#F0F0F0;border-bottom:1px solid #E4E4E4;box-sizing:border-box"></div>
<div style="left:734px;top:405px;width:420px;height:16px;background:#FFFFFF;border-bottom:1px solid #000;box-sizing:border-box"></div>
<div style="left:793px;top:405px;width:1px;height:16px;background:#000"></div>
<div class="t" style="left:737px;top:408.07px;font-size:9.9px;transform:scaleX(0.94);transform-origin:0 0">6</div>
<div style="left:853px;top:405px;width:1px;height:16px;background:#000"></div>
<div class="t" style="left:797px;top:408.07px;font-size:9.9px;transform:scaleX(0.94);transform-origin:0 0">0xA5F5</div>
<div style="left:913px;top:405px;width:1px;height:16px;background:#000"></div>
<div class="t" style="left:857px;top:408.07px;font-size:9.9px;transform:scaleX(0.94);transform-origin:0 0">95000</div>
<div style="left:973px;top:405px;width:1px;height:16px;background:#000"></div>
<div class="t" style="left:917px;top:408.07px;font-size:9.9px;transform:scaleX(0.94);transform-origin:0 0">%</div>
<div style="left:1033px;top:405px;width:1px;height:16px;background:#000"></div>
<div class="t" style="left:977px;top:408.07px;font-size:9.9px;transform:scaleX(0.94);transform-origin:0 0">24-bit</div>
<div style="left:1093px;top:405px;width:1px;height:16px;background:#000"></div>
<div class="t" style="left:1037px;top:408.07px;font-size:9.9px;transform:scaleX(0.94);transform-origin:0 0">0xA5F3</div>
<div style="left:1153px;top:405px;width:1px;height:16px;background:#000"></div>
<div style="left:1095px;top:406px;width:57px;height:13px;background:#90EE90"></div>
<div class="t" style="left:1097px;top:408.07px;font-size:9.9px;transform:scaleX(0.94);transform-origin:0 0">1231</div>
<div style="left:728px;top:421px;width:6px;height:17px;background:#F0F0F0;border-bottom:1px solid #E4E4E4;box-sizing:border-box"></div>
<div style="left:734px;top:421px;width:420px;height:17px;background:#F0FFFF;border-bottom:1px solid #000;box-sizing:border-box"></div>
<div style="left:793px;top:421px;width:1px;height:17px;background:#000"></div>
<div class="t" style="left:737px;top:424.07px;font-size:9.9px;transform:scaleX(0.94);transform-origin:0 0">7</div>
<div style="left:853px;top:421px;width:1px;height:17px;background:#000"></div>
<div class="t" style="left:797px;top:424.07px;font-size:9.9px;transform:scaleX(0.94);transform-origin:0 0">0xA5FA</div>
<div style="left:913px;top:421px;width:1px;height:17px;background:#000"></div>
<div class="t" style="left:857px;top:424.07px;font-size:9.9px;transform:scaleX(0.94);transform-origin:0 0">97500</div>
<div style="left:973px;top:421px;width:1px;height:17px;background:#000"></div>
<div class="t" style="left:917px;top:424.07px;font-size:9.9px;transform:scaleX(0.94);transform-origin:0 0">%</div>
<div style="left:1033px;top:421px;width:1px;height:17px;background:#000"></div>
<div class="t" style="left:977px;top:424.07px;font-size:9.9px;transform:scaleX(0.94);transform-origin:0 0">24-bit</div>
<div style="left:1093px;top:421px;width:1px;height:17px;background:#000"></div>
<div class="t" style="left:1037px;top:424.07px;font-size:9.9px;transform:scaleX(0.94);transform-origin:0 0">0xA5F8</div>
<div style="left:1153px;top:421px;width:1px;height:17px;background:#000"></div>
<div style="left:1095px;top:422px;width:57px;height:14px;background:#90EE90"></div>
<div class="t" style="left:1097px;top:424.07px;font-size:9.9px;transform:scaleX(0.94);transform-origin:0 0">1243</div>
<div class="t" style="left:608.5px;top:445.77px;font-size:12.4px;color:#000;transform:scaleX(0.927);transform-origin:0 0;">StartSAMULimitTable:</div>
<div style="left:727px;top:448px;width:435px;height:163px;border:1px solid #688CAF;box-sizing:border-box;background:#F0F0F0"></div>
<div style="left:728px;top:449px;width:6px;height:20px;background:#EFEFEF;border-bottom:1px solid #E4E4E4;box-sizing:border-box"></div>
<div style="left:734px;top:449px;width:61px;height:20px;background:linear-gradient(#FFFFFF 0%,#FFFFFF 38%,#F4F5F7 44%,#F0F1F3 100%);border-right:1px solid #E2E3E5;border-bottom:1px solid #DADBDD;box-sizing:border-box;overflow:hidden"></div>
<div style="left:795px;top:449px;width:61px;height:20px;background:linear-gradient(#FFFFFF 0%,#FFFFFF 38%,#F4F5F7 44%,#F0F1F3 100%);border-right:1px solid #E2E3E5;border-bottom:1px solid #DADBDD;box-sizing:border-box;overflow:hidden"></div>
<div style="left:856px;top:449px;width:62px;height:20px;background:linear-gradient(#FFFFFF 0%,#FFFFFF 38%,#F4F5F7 44%,#F0F1F3 100%);border-right:1px solid #E2E3E5;border-bottom:1px solid #DADBDD;box-sizing:border-box;overflow:hidden"></div>
<div style="left:918px;top:449px;width:61px;height:20px;background:linear-gradient(#FFFFFF 0%,#FFFFFF 38%,#F4F5F7 44%,#F0F1F3 100%);border-right:1px solid #E2E3E5;border-bottom:1px solid #DADBDD;box-sizing:border-box;overflow:hidden"></div>
<div style="left:979px;top:449px;width:61px;height:20px;background:linear-gradient(#FFFFFF 0%,#FFFFFF 38%,#F4F5F7 44%,#F0F1F3 100%);border-right:1px solid #E2E3E5;border-bottom:1px solid #DADBDD;box-sizing:border-box;overflow:hidden"></div>
<div style="left:1040px;top:449px;width:61px;height:20px;background:linear-gradient(#FFFFFF 0%,#FFFFFF 38%,#F4F5F7 44%,#F0F1F3 100%);border-right:1px solid #E2E3E5;border-bottom:1px solid #DADBDD;box-sizing:border-box;overflow:hidden"></div>
<div style="left:1101px;top:449px;width:61px;height:20px;background:linear-gradient(#FFFFFF 0%,#FFFFFF 38%,#F4F5F7 44%,#F0F1F3 100%);border-right:1px solid #E2E3E5;border-bottom:1px solid #DADBDD;box-sizing:border-box;overflow:hidden"></div>
<div style="left:734px;top:449px;width:60px;height:20px;overflow:hidden">
<div class="t" style="left:5px;top:4.59px;font-size:10.1px;transform:scaleX(0.94);transform-origin:0 0">DPM</div></div>
<div style="left:795px;top:449px;width:60px;height:20px;overflow:hidden">
<div class="t" style="left:5px;top:4.59px;font-size:10.1px;transform:scaleX(0.94);transform-origin:0 0">Address</div></div>
<div style="left:856px;top:449px;width:61px;height:20px;overflow:hidden">
<div class="t" style="left:5px;top:4.59px;font-size:10.1px;transform:scaleX(0.94);transform-origin:0 0">Value</div></div>
<div style="left:918px;top:449px;width:60px;height:20px;overflow:hidden">
<div class="t" style="left:5px;top:4.59px;font-size:10.1px;transform:scaleX(0.94);transform-origin:0 0">Units</div></div>
<div style="left:979px;top:449px;width:60px;height:20px;overflow:hidden">
<div class="t" style="left:5px;top:4.59px;font-size:10.1px;transform:scaleX(0.94);transform-origin:0 0">Length</div></div>
<div style="left:1040px;top:449px;width:60px;height:20px;overflow:hidden">
<div class="t" style="left:5px;top:4.59px;font-size:10.1px;transform:scaleX(0.94);transform-origin:0 0">AdrVoltage</div></div>
<div style="left:1101px;top:449px;width:60px;height:20px;overflow:hidden">
<div class="t" style="left:5px;top:4.59px;font-size:10.1px;transform:scaleX(0.94);transform-origin:0 0">Voltage</div></div>
<div style="left:728px;top:469px;width:6px;height:17px;background:#F0F0F0;border-bottom:1px solid #E4E4E4;box-sizing:border-box"></div>
<div style="left:734px;top:469px;width:428px;height:17px;background:#FFFFFF;border-bottom:1px solid #000;box-sizing:border-box"></div>
<div style="left:794px;top:469px;width:1px;height:17px;background:#000"></div>
<div class="t" style="left:737px;top:472.07px;font-size:9.9px;transform:scaleX(0.94);transform-origin:0 0">0</div>
<div style="left:855px;top:469px;width:1px;height:17px;background:#000"></div>
<div class="t" style="left:798px;top:472.07px;font-size:9.9px;transform:scaleX(0.94);transform-origin:0 0">0xA5AD</div>
<div style="left:917px;top:469px;width:1px;height:17px;background:#000"></div>
<div class="t" style="left:859px;top:472.07px;font-size:9.9px;transform:scaleX(0.94);transform-origin:0 0">45000</div>
<div style="left:978px;top:469px;width:1px;height:17px;background:#000"></div>
<div class="t" style="left:921px;top:472.07px;font-size:9.9px;transform:scaleX(0.94);transform-origin:0 0">%</div>
<div style="left:1039px;top:469px;width:1px;height:17px;background:#000"></div>
<div class="t" style="left:982px;top:472.07px;font-size:9.9px;transform:scaleX(0.94);transform-origin:0 0">24-bit</div>
<div style="left:1100px;top:469px;width:1px;height:17px;background:#000"></div>
<div class="t" style="left:1043px;top:472.07px;font-size:9.9px;transform:scaleX(0.94);transform-origin:0 0">0xA5AB</div>
<div style="left:1161px;top:469px;width:1px;height:17px;background:#000"></div>
<div style="left:1102px;top:470px;width:58px;height:14px;background:#90EE90"></div>
<div class="t" style="left:1104px;top:472.07px;font-size:9.9px;transform:scaleX(0.94);transform-origin:0 0">900</div>
<div style="left:728px;top:486px;width:6px;height:16px;background:#F0F0F0;border-bottom:1px solid #E4E4E4;box-sizing:border-box"></div>
<div style="left:734px;top:486px;width:428px;height:16px;background:#F0FFFF;border-bottom:1px solid #000;box-sizing:border-box"></div>
<div style="left:794px;top:486px;width:1px;height:16px;background:#000"></div>
<div class="t" style="left:737px;top:489.07px;font-size:9.9px;transform:scaleX(0.94);transform-origin:0 0">1</div>
<div style="left:855px;top:486px;width:1px;height:16px;background:#000"></div>
<div class="t" style="left:798px;top:489.07px;font-size:9.9px;transform:scaleX(0.94);transform-origin:0 0">0xA5B2</div>
<div style="left:917px;top:486px;width:1px;height:16px;background:#000"></div>
<div class="t" style="left:859px;top:489.07px;font-size:9.9px;transform:scaleX(0.94);transform-origin:0 0">45000</div>
<div style="left:978px;top:486px;width:1px;height:16px;background:#000"></div>
<div class="t" style="left:921px;top:489.07px;font-size:9.9px;transform:scaleX(0.94);transform-origin:0 0">%</div>
<div style="left:1039px;top:486px;width:1px;height:16px;background:#000"></div>
<div class="t" style="left:982px;top:489.07px;font-size:9.9px;transform:scaleX(0.94);transform-origin:0 0">24-bit</div>
<div style="left:1100px;top:486px;width:1px;height:16px;background:#000"></div>
<div class="t" style="left:1043px;top:489.07px;font-size:9.9px;transform:scaleX(0.94);transform-origin:0 0">0xA5B0</div>
<div style="left:1161px;top:486px;width:1px;height:16px;background:#000"></div>
<div style="left:1102px;top:487px;width:58px;height:13px;background:#90EE90"></div>
<div class="t" style="left:1104px;top:489.07px;font-size:9.9px;transform:scaleX(0.94);transform-origin:0 0">968</div>
<div style="left:728px;top:502px;width:6px;height:16px;background:#F0F0F0;border-bottom:1px solid #E4E4E4;box-sizing:border-box"></div>
<div style="left:734px;top:502px;width:428px;height:16px;background:#FFFFFF;border-bottom:1px solid #000;box-sizing:border-box"></div>
<div style="left:794px;top:502px;width:1px;height:16px;background:#000"></div>
<div class="t" style="left:737px;top:505.07px;font-size:9.9px;transform:scaleX(0.94);transform-origin:0 0">2</div>
<div style="left:855px;top:502px;width:1px;height:16px;background:#000"></div>
<div class="t" style="left:798px;top:505.07px;font-size:9.9px;transform:scaleX(0.94);transform-origin:0 0">0xA5B7</div>
<div style="left:917px;top:502px;width:1px;height:16px;background:#000"></div>
<div class="t" style="left:859px;top:505.07px;font-size:9.9px;transform:scaleX(0.94);transform-origin:0 0">52500</div>
<div style="left:978px;top:502px;width:1px;height:16px;background:#000"></div>
<div class="t" style="left:921px;top:505.07px;font-size:9.9px;transform:scaleX(0.94);transform-origin:0 0">%</div>
<div style="left:1039px;top:502px;width:1px;height:16px;background:#000"></div>
<div class="t" style="left:982px;top:505.07px;font-size:9.9px;transform:scaleX(0.94);transform-origin:0 0">24-bit</div>
<div style="left:1100px;top:502px;width:1px;height:16px;background:#000"></div>
<div class="t" style="left:1043px;top:505.07px;font-size:9.9px;transform:scaleX(0.94);transform-origin:0 0">0xA5B5</div>
<div style="left:1161px;top:502px;width:1px;height:16px;background:#000"></div>
<div style="left:1102px;top:503px;width:58px;height:13px;background:#90EE90"></div>
<div class="t" style="left:1104px;top:505.07px;font-size:9.9px;transform:scaleX(0.94);transform-origin:0 0">987</div>
<div style="left:728px;top:518px;width:6px;height:17px;background:#F0F0F0;border-bottom:1px solid #E4E4E4;box-sizing:border-box"></div>
<div style="left:734px;top:518px;width:428px;height:17px;background:#F0FFFF;border-bottom:1px solid #000;box-sizing:border-box"></div>
<div style="left:794px;top:518px;width:1px;height:17px;background:#000"></div>
<div class="t" style="left:737px;top:521.07px;font-size:9.9px;transform:scaleX(0.94);transform-origin:0 0">3</div>
<div style="left:855px;top:518px;width:1px;height:17px;background:#000"></div>
<div class="t" style="left:798px;top:521.07px;font-size:9.9px;transform:scaleX(0.94);transform-origin:0 0">0xA5BC</div>
<div style="left:917px;top:518px;width:1px;height:17px;background:#000"></div>
<div class="t" style="left:859px;top:521.07px;font-size:9.9px;transform:scaleX(0.94);transform-origin:0 0">62500</div>
<div style="left:978px;top:518px;width:1px;height:17px;background:#000"></div>
<div class="t" style="left:921px;top:521.07px;font-size:9.9px;transform:scaleX(0.94);transform-origin:0 0">%</div>
<div style="left:1039px;top:518px;width:1px;height:17px;background:#000"></div>
<div class="t" style="left:982px;top:521.07px;font-size:9.9px;transform:scaleX(0.94);transform-origin:0 0">24-bit</div>
<div style="left:1100px;top:518px;width:1px;height:17px;background:#000"></div>
<div class="t" style="left:1043px;top:521.07px;font-size:9.9px;transform:scaleX(0.94);transform-origin:0 0">0xA5BA</div>
<div style="left:1161px;top:518px;width:1px;height:17px;background:#000"></div>
<div style="left:1102px;top:519px;width:58px;height:14px;background:#90EE90"></div>
<div class="t" style="left:1104px;top:521.07px;font-size:9.9px;transform:scaleX(0.94);transform-origin:0 0">1193</div>
<div style="left:728px;top:535px;width:6px;height:16px;background:#F0F0F0;border-bottom:1px solid #E4E4E4;box-sizing:border-box"></div>
<div style="left:734px;top:535px;width:428px;height:16px;background:#FFFFFF;border-bottom:1px solid #000;box-sizing:border-box"></div>
<div style="left:794px;top:535px;width:1px;height:16px;background:#000"></div>
<div class="t" style="left:737px;top:538.07px;font-size:9.9px;transform:scaleX(0.94);transform-origin:0 0">4</div>
<div style="left:855px;top:535px;width:1px;height:16px;background:#000"></div>
<div class="t" style="left:798px;top:538.07px;font-size:9.9px;transform:scaleX(0.94);transform-origin:0 0">0xA5C1</div>
<div style="left:917px;top:535px;width:1px;height:16px;background:#000"></div>
<div class="t" style="left:859px;top:538.07px;font-size:9.9px;transform:scaleX(0.94);transform-origin:0 0">72500</div>
<div style="left:978px;top:535px;width:1px;height:16px;background:#000"></div>
<div class="t" style="left:921px;top:538.07px;font-size:9.9px;transform:scaleX(0.94);transform-origin:0 0">%</div>
<div style="left:1039px;top:535px;width:1px;height:16px;background:#000"></div>
<div class="t" style="left:982px;top:538.07px;font-size:9.9px;transform:scaleX(0.94);transform-origin:0 0">24-bit</div>
<div style="left:1100px;top:535px;width:1px;height:16px;background:#000"></div>
<div class="t" style="left:1043px;top:538.07px;font-size:9.9px;transform:scaleX(0.94);transform-origin:0 0">0xA5BF</div>
<div style="left:1161px;top:535px;width:1px;height:16px;background:#000"></div>
<div style="left:1102px;top:536px;width:58px;height:13px;background:#90EE90"></div>
<div class="t" style="left:1104px;top:538.07px;font-size:9.9px;transform:scaleX(0.94);transform-origin:0 0">1212</div>
<div style="left:728px;top:551px;width:6px;height:17px;background:#F0F0F0;border-bottom:1px solid #E4E4E4;box-sizing:border-box"></div>
<div style="left:734px;top:551px;width:428px;height:17px;background:#F0FFFF;border-bottom:1px solid #000;box-sizing:border-box"></div>
<div style="left:794px;top:551px;width:1px;height:17px;background:#000"></div>
<div class="t" style="left:737px;top:554.07px;font-size:9.9px;transform:scaleX(0.94);transform-origin:0 0">5</div>
<div style="left:855px;top:551px;width:1px;height:17px;background:#000"></div>
<div class="t" style="left:798px;top:554.07px;font-size:9.9px;transform:scaleX(0.94);transform-origin:0 0">0xA5C6</div>
<div style="left:917px;top:551px;width:1px;height:17px;background:#000"></div>
<div class="t" style="left:859px;top:554.07px;font-size:9.9px;transform:scaleX(0.94);transform-origin:0 0">77500</div>
<div style="left:978px;top:551px;width:1px;height:17px;background:#000"></div>
<div class="t" style="left:921px;top:554.07px;font-size:9.9px;transform:scaleX(0.94);transform-origin:0 0">%</div>
<div style="left:1039px;top:551px;width:1px;height:17px;background:#000"></div>
<div class="t" style="left:982px;top:554.07px;font-size:9.9px;transform:scaleX(0.94);transform-origin:0 0">24-bit</div>
<div style="left:1100px;top:551px;width:1px;height:17px;background:#000"></div>
<div class="t" style="left:1043px;top:554.07px;font-size:9.9px;transform:scaleX(0.94);transform-origin:0 0">0xA5C4</div>
<div style="left:1161px;top:551px;width:1px;height:17px;background:#000"></div>
<div style="left:1102px;top:552px;width:58px;height:14px;background:#90EE90"></div>
<div class="t" style="left:1104px;top:554.07px;font-size:9.9px;transform:scaleX(0.94);transform-origin:0 0">1225</div>
<div style="left:728px;top:568px;width:6px;height:16px;background:#F0F0F0;border-bottom:1px solid #E4E4E4;box-sizing:border-box"></div>
<div style="left:734px;top:568px;width:428px;height:16px;background:#FFFFFF;border-bottom:1px solid #000;box-sizing:border-box"></div>
<div style="left:794px;top:568px;width:1px;height:16px;background:#000"></div>
<div class="t" style="left:737px;top:571.07px;font-size:9.9px;transform:scaleX(0.94);transform-origin:0 0">6</div>
<div style="left:855px;top:568px;width:1px;height:16px;background:#000"></div>
<div class="t" style="left:798px;top:571.07px;font-size:9.9px;transform:scaleX(0.94);transform-origin:0 0">0xA5CB</div>
<div style="left:917px;top:568px;width:1px;height:16px;background:#000"></div>
<div class="t" style="left:859px;top:571.07px;font-size:9.9px;transform:scaleX(0.94);transform-origin:0 0">85000</div>
<div style="left:978px;top:568px;width:1px;height:16px;background:#000"></div>
<div class="t" style="left:921px;top:571.07px;font-size:9.9px;transform:scaleX(0.94);transform-origin:0 0">%</div>
<div style="left:1039px;top:568px;width:1px;height:16px;background:#000"></div>
<div class="t" style="left:982px;top:571.07px;font-size:9.9px;transform:scaleX(0.94);transform-origin:0 0">24-bit</div>
<div style="left:1100px;top:568px;width:1px;height:16px;background:#000"></div>
<div class="t" style="left:1043px;top:571.07px;font-size:9.9px;transform:scaleX(0.94);transform-origin:0 0">0xA5C9</div>
<div style="left:1161px;top:568px;width:1px;height:16px;background:#000"></div>
<div style="left:1102px;top:568px;width:58px;height:14px;background:#90EE90"></div>
<div class="t" style="left:1104px;top:571.07px;font-size:9.9px;transform:scaleX(0.94);transform-origin:0 0">1231</div>
<div style="left:728px;top:584px;width:6px;height:16px;background:#F0F0F0;border-bottom:1px solid #E4E4E4;box-sizing:border-box"></div>
<div style="left:734px;top:584px;width:428px;height:16px;background:#F0FFFF;border-bottom:1px solid #000;box-sizing:border-box"></div>
<div style="left:794px;top:584px;width:1px;height:16px;background:#000"></div>
<div class="t" style="left:737px;top:587.07px;font-size:9.9px;transform:scaleX(0.94);transform-origin:0 0">7</div>
<div style="left:855px;top:584px;width:1px;height:16px;background:#000"></div>
<div class="t" style="left:798px;top:587.07px;font-size:9.9px;transform:scaleX(0.94);transform-origin:0 0">0xA5D0</div>
<div style="left:917px;top:584px;width:1px;height:16px;background:#000"></div>
<div class="t" style="left:859px;top:587.07px;font-size:9.9px;transform:scaleX(0.94);transform-origin:0 0">90000</div>
<div style="left:978px;top:584px;width:1px;height:16px;background:#000"></div>
<div class="t" style="left:921px;top:587.07px;font-size:9.9px;transform:scaleX(0.94);transform-origin:0 0">%</div>
<div style="left:1039px;top:584px;width:1px;height:16px;background:#000"></div>
<div class="t" style="left:982px;top:587.07px;font-size:9.9px;transform:scaleX(0.94);transform-origin:0 0">24-bit</div>
<div style="left:1100px;top:584px;width:1px;height:16px;background:#000"></div>
<div class="t" style="left:1043px;top:587.07px;font-size:9.9px;transform:scaleX(0.94);transform-origin:0 0">0xA5CE</div>
<div style="left:1161px;top:584px;width:1px;height:16px;background:#000"></div>
<div style="left:1102px;top:585px;width:58px;height:13px;background:#90EE90"></div>
<div class="t" style="left:1104px;top:587.07px;font-size:9.9px;transform:scaleX(0.94);transform-origin:0 0">1243</div>
<div class="t" style="left:617.3px;top:620.67px;font-size:12.4px;color:#000;transform:scaleX(0.927);transform-origin:0 0;">StartUVDLimitTable:</div>
<div style="left:727px;top:619px;width:428px;height:162px;border:1px solid #688CAF;box-sizing:border-box;background:#F0F0F0"></div>
<div style="left:728px;top:620px;width:6px;height:21px;background:#EFEFEF;border-bottom:1px solid #E4E4E4;box-sizing:border-box"></div>
<div style="left:734px;top:620px;width:60px;height:21px;background:linear-gradient(#FFFFFF 0%,#FFFFFF 38%,#F4F5F7 44%,#F0F1F3 100%);border-right:1px solid #E2E3E5;border-bottom:1px solid #DADBDD;box-sizing:border-box;overflow:hidden"></div>
<div style="left:794px;top:620px;width:60px;height:21px;background:linear-gradient(#FFFFFF 0%,#FFFFFF 38%,#F4F5F7 44%,#F0F1F3 100%);border-right:1px solid #E2E3E5;border-bottom:1px solid #DADBDD;box-sizing:border-box;overflow:hidden"></div>
<div style="left:854px;top:620px;width:60px;height:21px;background:linear-gradient(#FFFFFF 0%,#FFFFFF 38%,#F4F5F7 44%,#F0F1F3 100%);border-right:1px solid #E2E3E5;border-bottom:1px solid #DADBDD;box-sizing:border-box;overflow:hidden"></div>
<div style="left:914px;top:620px;width:60px;height:21px;background:linear-gradient(#FFFFFF 0%,#FFFFFF 38%,#F4F5F7 44%,#F0F1F3 100%);border-right:1px solid #E2E3E5;border-bottom:1px solid #DADBDD;box-sizing:border-box;overflow:hidden"></div>
<div style="left:974px;top:620px;width:60px;height:21px;background:linear-gradient(#FFFFFF 0%,#FFFFFF 38%,#F4F5F7 44%,#F0F1F3 100%);border-right:1px solid #E2E3E5;border-bottom:1px solid #DADBDD;box-sizing:border-box;overflow:hidden"></div>
<div style="left:1034px;top:620px;width:60px;height:21px;background:linear-gradient(#FFFFFF 0%,#FFFFFF 38%,#F4F5F7 44%,#F0F1F3 100%);border-right:1px solid #E2E3E5;border-bottom:1px solid #DADBDD;box-sizing:border-box;overflow:hidden"></div>
<div style="left:1094px;top:620px;width:60px;height:21px;background:linear-gradient(#FFFFFF 0%,#FFFFFF 38%,#F4F5F7 44%,#F0F1F3 100%);border-right:1px solid #E2E3E5;border-bottom:1px solid #DADBDD;box-sizing:border-box;overflow:hidden"></div>
<div style="left:734px;top:620px;width:59px;height:20px;overflow:hidden">
<div class="t" style="left:5px;top:4.59px;font-size:10.1px;transform:scaleX(0.94);transform-origin:0 0">DPM</div></div>
<div style="left:794px;top:620px;width:59px;height:20px;overflow:hidden">
<div class="t" style="left:5px;top:4.59px;font-size:10.1px;transform:scaleX(0.94);transform-origin:0 0">Address</div></div>
<div style="left:854px;top:620px;width:59px;height:20px;overflow:hidden">
<div class="t" style="left:5px;top:4.59px;font-size:10.1px;transform:scaleX(0.94);transform-origin:0 0">Value</div></div>
<div style="left:914px;top:620px;width:59px;height:20px;overflow:hidden">
<div class="t" style="left:5px;top:4.59px;font-size:10.1px;transform:scaleX(0.94);transform-origin:0 0">Units</div></div>
<div style="left:974px;top:620px;width:59px;height:20px;overflow:hidden">
<div class="t" style="left:5px;top:4.59px;font-size:10.1px;transform:scaleX(0.94);transform-origin:0 0">Length</div></div>
<div style="left:1034px;top:620px;width:59px;height:20px;overflow:hidden">
<div class="t" style="left:5px;top:4.59px;font-size:10.1px;transform:scaleX(0.94);transform-origin:0 0">AdrVoltage</div></div>
<div style="left:1094px;top:620px;width:59px;height:20px;overflow:hidden">
<div class="t" style="left:5px;top:4.59px;font-size:10.1px;transform:scaleX(0.94);transform-origin:0 0">Voltage</div></div>
<div style="left:728px;top:641px;width:6px;height:16px;background:#F0F0F0;border-bottom:1px solid #E4E4E4;box-sizing:border-box"></div>
<div style="left:734px;top:641px;width:420px;height:16px;background:#FFFFFF;border-bottom:1px solid #000;box-sizing:border-box"></div>
<div style="left:793px;top:641px;width:1px;height:16px;background:#000"></div>
<div class="t" style="left:737px;top:644.07px;font-size:9.9px;transform:scaleX(0.94);transform-origin:0 0">0</div>
<div style="left:853px;top:641px;width:1px;height:16px;background:#000"></div>
<div class="t" style="left:797px;top:644.07px;font-size:9.9px;transform:scaleX(0.94);transform-origin:0 0">0xA593</div>
<div style="left:913px;top:641px;width:1px;height:16px;background:#000"></div>
<div class="t" style="left:857px;top:644.07px;font-size:9.9px;transform:scaleX(0.94);transform-origin:0 0">0</div>
<div style="left:973px;top:641px;width:1px;height:16px;background:#000"></div>
<div class="t" style="left:917px;top:644.07px;font-size:9.9px;transform:scaleX(0.94);transform-origin:0 0">DPM</div>
<div style="left:1033px;top:641px;width:1px;height:16px;background:#000"></div>
<div class="t" style="left:977px;top:644.07px;font-size:9.9px;transform:scaleX(0.94);transform-origin:0 0">8-bit</div>
<div style="left:1093px;top:641px;width:1px;height:16px;background:#000"></div>
<div class="t" style="left:1037px;top:644.07px;font-size:9.9px;transform:scaleX(0.94);transform-origin:0 0">0xA591</div>
<div style="left:1153px;top:641px;width:1px;height:16px;background:#000"></div>
<div style="left:1095px;top:642px;width:57px;height:13px;background:#90EE90"></div>
<div class="t" style="left:1097px;top:644.07px;font-size:9.9px;transform:scaleX(0.94);transform-origin:0 0">900</div>
<div style="left:728px;top:657px;width:6px;height:17px;background:#F0F0F0;border-bottom:1px solid #E4E4E4;box-sizing:border-box"></div>
<div style="left:734px;top:657px;width:420px;height:17px;background:#F0FFFF;border-bottom:1px solid #000;box-sizing:border-box"></div>
<div style="left:793px;top:657px;width:1px;height:17px;background:#000"></div>
<div class="t" style="left:737px;top:660.07px;font-size:9.9px;transform:scaleX(0.94);transform-origin:0 0">1</div>
<div style="left:853px;top:657px;width:1px;height:17px;background:#000"></div>
<div class="t" style="left:797px;top:660.07px;font-size:9.9px;transform:scaleX(0.94);transform-origin:0 0">0xA596</div>
<div style="left:913px;top:657px;width:1px;height:17px;background:#000"></div>
<div class="t" style="left:857px;top:660.07px;font-size:9.9px;transform:scaleX(0.94);transform-origin:0 0">0</div>
<div style="left:973px;top:657px;width:1px;height:17px;background:#000"></div>
<div class="t" style="left:917px;top:660.07px;font-size:9.9px;transform:scaleX(0.94);transform-origin:0 0">DPM</div>
<div style="left:1033px;top:657px;width:1px;height:17px;background:#000"></div>
<div class="t" style="left:977px;top:660.07px;font-size:9.9px;transform:scaleX(0.94);transform-origin:0 0">8-bit</div>
<div style="left:1093px;top:657px;width:1px;height:17px;background:#000"></div>
<div class="t" style="left:1037px;top:660.07px;font-size:9.9px;transform:scaleX(0.94);transform-origin:0 0">0xA594</div>
<div style="left:1153px;top:657px;width:1px;height:17px;background:#000"></div>
<div style="left:1095px;top:658px;width:57px;height:14px;background:#90EE90"></div>
<div class="t" style="left:1097px;top:660.07px;font-size:9.9px;transform:scaleX(0.94);transform-origin:0 0">968</div>
<div style="left:728px;top:674px;width:6px;height:16px;background:#F0F0F0;border-bottom:1px solid #E4E4E4;box-sizing:border-box"></div>
<div style="left:734px;top:674px;width:420px;height:16px;background:#FFFFFF;border-bottom:1px solid #000;box-sizing:border-box"></div>
<div style="left:793px;top:674px;width:1px;height:16px;background:#000"></div>
<div class="t" style="left:737px;top:677.07px;font-size:9.9px;transform:scaleX(0.94);transform-origin:0 0">2</div>
<div style="left:853px;top:674px;width:1px;height:16px;background:#000"></div>
<div class="t" style="left:797px;top:677.07px;font-size:9.9px;transform:scaleX(0.94);transform-origin:0 0">0xA599</div>
<div style="left:913px;top:674px;width:1px;height:16px;background:#000"></div>
<div class="t" style="left:857px;top:677.07px;font-size:9.9px;transform:scaleX(0.94);transform-origin:0 0">1</div>
<div style="left:973px;top:674px;width:1px;height:16px;background:#000"></div>
<div class="t" style="left:917px;top:677.07px;font-size:9.9px;transform:scaleX(0.94);transform-origin:0 0">DPM</div>
<div style="left:1033px;top:674px;width:1px;height:16px;background:#000"></div>
<div class="t" style="left:977px;top:677.07px;font-size:9.9px;transform:scaleX(0.94);transform-origin:0 0">8-bit</div>
<div style="left:1093px;top:674px;width:1px;height:16px;background:#000"></div>
<div class="t" style="left:1037px;top:677.07px;font-size:9.9px;transform:scaleX(0.94);transform-origin:0 0">0xA597</div>
<div style="left:1153px;top:674px;width:1px;height:16px;background:#000"></div>
<div style="left:1095px;top:675px;width:57px;height:13px;background:#90EE90"></div>
<div class="t" style="left:1097px;top:677.07px;font-size:9.9px;transform:scaleX(0.94);transform-origin:0 0">987</div>
<div style="left:728px;top:690px;width:6px;height:16px;background:#F0F0F0;border-bottom:1px solid #E4E4E4;box-sizing:border-box"></div>
<div style="left:734px;top:690px;width:420px;height:16px;background:#F0FFFF;border-bottom:1px solid #000;box-sizing:border-box"></div>
<div style="left:793px;top:690px;width:1px;height:16px;background:#000"></div>
<div class="t" style="left:737px;top:693.07px;font-size:9.9px;transform:scaleX(0.94);transform-origin:0 0">3</div>
<div style="left:853px;top:690px;width:1px;height:16px;background:#000"></div>
<div class="t" style="left:797px;top:693.07px;font-size:9.9px;transform:scaleX(0.94);transform-origin:0 0">0xA59C</div>
<div style="left:913px;top:690px;width:1px;height:16px;background:#000"></div>
<div class="t" style="left:857px;top:693.07px;font-size:9.9px;transform:scaleX(0.94);transform-origin:0 0">2</div>
<div style="left:973px;top:690px;width:1px;height:16px;background:#000"></div>
<div class="t" style="left:917px;top:693.07px;font-size:9.9px;transform:scaleX(0.94);transform-origin:0 0">DPM</div>
<div style="left:1033px;top:690px;width:1px;height:16px;background:#000"></div>
<div class="t" style="left:977px;top:693.07px;font-size:9.9px;transform:scaleX(0.94);transform-origin:0 0">8-bit</div>
<div style="left:1093px;top:690px;width:1px;height:16px;background:#000"></div>
<div class="t" style="left:1037px;top:693.07px;font-size:9.9px;transform:scaleX(0.94);transform-origin:0 0">0xA59A</div>
<div style="left:1153px;top:690px;width:1px;height:16px;background:#000"></div>
<div style="left:1095px;top:691px;width:57px;height:13px;background:#90EE90"></div>
<div class="t" style="left:1097px;top:693.07px;font-size:9.9px;transform:scaleX(0.94);transform-origin:0 0">1193</div>
<div style="left:728px;top:706px;width:6px;height:17px;background:#F0F0F0;border-bottom:1px solid #E4E4E4;box-sizing:border-box"></div>
<div style="left:734px;top:706px;width:420px;height:17px;background:#FFFFFF;border-bottom:1px solid #000;box-sizing:border-box"></div>
<div style="left:793px;top:706px;width:1px;height:17px;background:#000"></div>
<div class="t" style="left:737px;top:709.07px;font-size:9.9px;transform:scaleX(0.94);transform-origin:0 0">4</div>
<div style="left:853px;top:706px;width:1px;height:17px;background:#000"></div>
<div class="t" style="left:797px;top:709.07px;font-size:9.9px;transform:scaleX(0.94);transform-origin:0 0">0xA59F</div>
<div style="left:913px;top:706px;width:1px;height:17px;background:#000"></div>
<div class="t" style="left:857px;top:709.07px;font-size:9.9px;transform:scaleX(0.94);transform-origin:0 0">3</div>
<div style="left:973px;top:706px;width:1px;height:17px;background:#000"></div>
<div class="t" style="left:917px;top:709.07px;font-size:9.9px;transform:scaleX(0.94);transform-origin:0 0">DPM</div>
<div style="left:1033px;top:706px;width:1px;height:17px;background:#000"></div>
<div class="t" style="left:977px;top:709.07px;font-size:9.9px;transform:scaleX(0.94);transform-origin:0 0">8-bit</div>
<div style="left:1093px;top:706px;width:1px;height:17px;background:#000"></div>
<div class="t" style="left:1037px;top:709.07px;font-size:9.9px;transform:scaleX(0.94);transform-origin:0 0">0xA59D</div>
<div style="left:1153px;top:706px;width:1px;height:17px;background:#000"></div>
<div style="left:1095px;top:707px;width:57px;height:14px;background:#90EE90"></div>
<div class="t" style="left:1097px;top:709.07px;font-size:9.9px;transform:scaleX(0.94);transform-origin:0 0">1212</div>
<div style="left:728px;top:723px;width:6px;height:16px;background:#F0F0F0;border-bottom:1px solid #E4E4E4;box-sizing:border-box"></div>
<div style="left:734px;top:723px;width:420px;height:16px;background:#F0FFFF;border-bottom:1px solid #000;box-sizing:border-box"></div>
<div style="left:793px;top:723px;width:1px;height:16px;background:#000"></div>
<div class="t" style="left:737px;top:726.07px;font-size:9.9px;transform:scaleX(0.94);transform-origin:0 0">5</div>
<div style="left:853px;top:723px;width:1px;height:16px;background:#000"></div>
<div class="t" style="left:797px;top:726.07px;font-size:9.9px;transform:scaleX(0.94);transform-origin:0 0">0xA5A2</div>
<div style="left:913px;top:723px;width:1px;height:16px;background:#000"></div>
<div class="t" style="left:857px;top:726.07px;font-size:9.9px;transform:scaleX(0.94);transform-origin:0 0">4</div>
<div style="left:973px;top:723px;width:1px;height:16px;background:#000"></div>
<div class="t" style="left:917px;top:726.07px;font-size:9.9px;transform:scaleX(0.94);transform-origin:0 0">DPM</div>
<div style="left:1033px;top:723px;width:1px;height:16px;background:#000"></div>
<div class="t" style="left:977px;top:726.07px;font-size:9.9px;transform:scaleX(0.94);transform-origin:0 0">8-bit</div>
<div style="left:1093px;top:723px;width:1px;height:16px;background:#000"></div>
<div class="t" style="left:1037px;top:726.07px;font-size:9.9px;transform:scaleX(0.94);transform-origin:0 0">0xA5A0</div>
<div style="left:1153px;top:723px;width:1px;height:16px;background:#000"></div>
<div style="left:1095px;top:724px;width:57px;height:13px;background:#90EE90"></div>
<div class="t" style="left:1097px;top:726.07px;font-size:9.9px;transform:scaleX(0.94);transform-origin:0 0">1225</div>
<div style="left:728px;top:739px;width:6px;height:16px;background:#F0F0F0;border-bottom:1px solid #E4E4E4;box-sizing:border-box"></div>
<div style="left:734px;top:739px;width:420px;height:16px;background:#FFFFFF;border-bottom:1px solid #000;box-sizing:border-box"></div>
<div style="left:793px;top:739px;width:1px;height:16px;background:#000"></div>
<div class="t" style="left:737px;top:742.07px;font-size:9.9px;transform:scaleX(0.94);transform-origin:0 0">6</div>
<div style="left:853px;top:739px;width:1px;height:16px;background:#000"></div>
<div class="t" style="left:797px;top:742.07px;font-size:9.9px;transform:scaleX(0.94);transform-origin:0 0">0xA5A5</div>
<div style="left:913px;top:739px;width:1px;height:16px;background:#000"></div>
<div class="t" style="left:857px;top:742.07px;font-size:9.9px;transform:scaleX(0.94);transform-origin:0 0">5</div>
<div style="left:973px;top:739px;width:1px;height:16px;background:#000"></div>
<div class="t" style="left:917px;top:742.07px;font-size:9.9px;transform:scaleX(0.94);transform-origin:0 0">DPM</div>
<div style="left:1033px;top:739px;width:1px;height:16px;background:#000"></div>
<div class="t" style="left:977px;top:742.07px;font-size:9.9px;transform:scaleX(0.94);transform-origin:0 0">8-bit</div>
<div style="left:1093px;top:739px;width:1px;height:16px;background:#000"></div>
<div class="t" style="left:1037px;top:742.07px;font-size:9.9px;transform:scaleX(0.94);transform-origin:0 0">0xA5A3</div>
<div style="left:1153px;top:739px;width:1px;height:16px;background:#000"></div>
<div style="left:1095px;top:740px;width:57px;height:13px;background:#90EE90"></div>
<div class="t" style="left:1097px;top:742.07px;font-size:9.9px;transform:scaleX(0.94);transform-origin:0 0">1231</div>
<div style="left:728px;top:755px;width:6px;height:17px;background:#F0F0F0;border-bottom:1px solid #E4E4E4;box-sizing:border-box"></div>
<div style="left:734px;top:755px;width:420px;height:17px;background:#F0FFFF;border-bottom:1px solid #000;box-sizing:border-box"></div>
<div style="left:793px;top:755px;width:1px;height:17px;background:#000"></div>
<div class="t" style="left:737px;top:758.07px;font-size:9.9px;transform:scaleX(0.94);transform-origin:0 0">7</div>
<div style="left:853px;top:755px;width:1px;height:17px;background:#000"></div>
<div class="t" style="left:797px;top:758.07px;font-size:9.9px;transform:scaleX(0.94);transform-origin:0 0">0xA5A8</div>
<div style="left:913px;top:755px;width:1px;height:17px;background:#000"></div>
<div class="t" style="left:857px;top:758.07px;font-size:9.9px;transform:scaleX(0.94);transform-origin:0 0">6</div>
<div style="left:973px;top:755px;width:1px;height:17px;background:#000"></div>
<div class="t" style="left:917px;top:758.07px;font-size:9.9px;transform:scaleX(0.94);transform-origin:0 0">DPM</div>
<div style="left:1033px;top:755px;width:1px;height:17px;background:#000"></div>
<div class="t" style="left:977px;top:758.07px;font-size:9.9px;transform:scaleX(0.94);transform-origin:0 0">8-bit</div>
<div style="left:1093px;top:755px;width:1px;height:17px;background:#000"></div>
<div class="t" style="left:1037px;top:758.07px;font-size:9.9px;transform:scaleX(0.94);transform-origin:0 0">0xA5A6</div>
<div style="left:1153px;top:755px;width:1px;height:17px;background:#000"></div>
<div style="left:1095px;top:756px;width:57px;height:14px;background:#90EE90"></div>
<div class="t" style="left:1097px;top:758.07px;font-size:9.9px;transform:scaleX(0.94);transform-origin:0 0">1243</div>
<div style="left:594px;top:4px;width:18px;height:790px;background:linear-gradient(90deg,rgba(0,0,0,0.13),rgba(0,0,0,0))"></div>
<div style="left:1150px;top:4px;width:17px;height:790px;background:linear-gradient(90deg,rgba(0,0,0,0),rgba(0,0,0,0.09))"></div>
<div style="left:1167px;top:3px;width:586px;height:793px;background:#fff;border:1px solid #858585;box-sizing:border-box"></div>
<div style="left:1175px;top:10px;width:18px;height:18px"><svg style="display:block" width="18" height="18" viewBox="0 0 18 18"><path d="M7.6 7 C6.6 9.8 6.3 13.2 6.6 17 L9.4 17 C8.9 13.5 9 10 10.3 7 Z" fill="#C9641A"/><path d="M8.6 7.6 C7.9 10.3 7.7 13.5 7.9 16.6" stroke="#F2A646" stroke-width="1" fill="none"/><g fill="none" stroke-linecap="round"><path d="M8.8 6.2 Q4 3.6 1.3 7.4" stroke="#1F8A34" stroke-width="2"/><path d="M8.6 5.8 Q5.5 2.4 2.8 3.3" stroke="#3DA64E" stroke-width="1.8"/><path d="M8.9 6 Q8.3 2.6 6.6 1.3" stroke="#228C36" stroke-width="1.9"/><path d="M9 6 Q12.6 3.2 16.2 7.6" stroke="#1F8A34" stroke-width="2"/><path d="M9.2 6.4 Q13 6 14.6 10" stroke="#1A7F2E" stroke-width="1.9"/><path d="M9 6 Q11 3 13 3.4" stroke="#45AE55" stroke-width="1.5"/></g></svg></div>
<div class="t" style="left:1197.4px;top:11.67px;font-size:12.4px;color:#8C8C8C;transform:scaleX(0.887);transform-origin:0 0;">Hawaii Bios Reader 2.1.5982.24843</div>
<div style="left:1633px;top:18px;width:10px;height:1px;background:#8C8C8C"></div>
<div style="left:1678px;top:13px;width:10px;height:10px;border:1px solid #DDDDDD;box-sizing:border-box"></div>
<div style="left:1723px;top:12px;width:12px;height:12px"><svg style="display:block" width="12" height="12" viewBox="0 0 12 12"><path d="M1 1 L11 11 M11 1 L1 11" stroke="#8C8C8C" stroke-width="1.05" fill="none"/></svg></div>
<div style="left:1178px;top:44px;width:60px;height:20px;background:#DDDDDD;border:1px solid #707070;box-sizing:border-box;box-shadow:inset 0 0 0 1px #E6E6E6"></div>
<div class="t" style="left:1058.0px;width:300px;top:47.87px;font-size:12.4px;color:#000;text-align:center;transform:scaleX(0.927);transform-origin:50% 0">Open File</div>
<div style="left:1254px;top:44px;width:60px;height:20px;background:#DDDDDD;border:1px solid #707070;box-sizing:border-box;box-shadow:inset 0 0 0 1px #E6E6E6"></div>
<div class="t" style="left:1134.0px;width:300px;top:47.87px;font-size:12.4px;color:#000;text-align:center;transform:scaleX(0.927);transform-origin:50% 0">Save File</div>
<div class="t" style="left:1333.6px;top:46.67px;font-size:12.4px;color:#000;transform:scaleX(0.927);transform-origin:0 0;">Bios name:</div>
<div style="left:1414px;top:44px;width:306px;height:20px;border:1px solid #ABADB3;box-sizing:border-box;background:#fff"></div>
<div class="t" style="left:1417.6px;top:46.67px;font-size:12.4px;color:#000;transform:scaleX(0.927);transform-origin:0 0;letter-spacing:-0.4px">MS-V30823-F5▯GRENADA▯PCI_EXPRESS</div>
<div style="left:1178px;top:103px;width:564px;height:682px;border:1px solid #ACACAC;box-sizing:border-box;background:#fff"></div>
<div style="left:1180px;top:76px;width:62px;height:28px;background:linear-gradient(#F0F0F0,#E5E5E5);border:1px solid #ACACAC;box-sizing:border-box"></div>
<div class="t" style="left:1061.0px;width:300px;top:82.87px;font-size:12.4px;color:#000;text-align:center;transform:scaleX(0.927);transform-origin:50% 0">Overview</div>
<div style="left:1240px;top:76px;width:68px;height:28px;background:linear-gradient(#F0F0F0,#E5E5E5);border:1px solid #ACACAC;box-sizing:border-box"></div>
<div class="t" style="left:1124.2px;width:300px;top:82.87px;font-size:12.4px;color:#000;text-align:center;transform:scaleX(0.927);transform-origin:50% 0">PowerPlay</div>
<div style="left:1307px;top:76px;width:74px;height:28px;background:linear-gradient(#F0F0F0,#E5E5E5);border:1px solid #ACACAC;box-sizing:border-box"></div>
<div class="t" style="left:1194.0px;width:300px;top:82.87px;font-size:12.4px;color:#000;text-align:center;transform:scaleX(0.927);transform-origin:50% 0">Limit Tables</div>
<div style="left:1448px;top:76px;width:83px;height:28px;background:linear-gradient(#F0F0F0,#E5E5E5);border:1px solid #ACACAC;box-sizing:border-box"></div>
<div class="t" style="left:1339.5px;width:300px;top:82.87px;font-size:12.4px;color:#000;text-align:center;transform:scaleX(0.927);transform-origin:50% 0">VRM settings</div>
<div style="left:1530px;top:76px;width:46px;height:28px;background:linear-gradient(#F0F0F0,#E5E5E5);border:1px solid #ACACAC;box-sizing:border-box"></div>
<div class="t" style="left:1403.0px;width:300px;top:82.87px;font-size:12.4px;color:#000;text-align:center;transform:scaleX(0.927);transform-origin:50% 0">About</div>
<div style="left:1378px;top:74px;width:72px;height:30px;background:#fff;border:1px solid #ACACAC;border-radius:2px 2px 0 0;box-sizing:border-box"></div>
<div class="t" style="left:1264.5px;width:300px;top:80.87px;font-size:12.4px;color:#000;text-align:center;transform:scaleX(0.927);transform-origin:50% 0">Fan profile</div>
<div style="left:1381px;top:108px;width:353px;height:233px;border:1px solid #688CAF;box-sizing:border-box;background:#F0F0F0"></div>
<div style="left:1382px;top:109px;width:6px;height:24px;background:#EFEFEF;border-bottom:1px solid #E4E4E4;box-sizing:border-box"></div>
<div style="left:1388px;top:109px;width:86px;height:24px;background:linear-gradient(#FFFFFF 0%,#FFFFFF 38%,#F4F5F7 44%,#F0F1F3 100%);border-right:1px solid #E2E3E5;border-bottom:1px solid #DADBDD;box-sizing:border-box;overflow:hidden"></div>
<div style="left:1474px;top:109px;width:86px;height:24px;background:linear-gradient(#FFFFFF 0%,#FFFFFF 38%,#F4F5F7 44%,#F0F1F3 100%);border-right:1px solid #E2E3E5;border-bottom:1px solid #DADBDD;box-sizing:border-box;overflow:hidden"></div>
<div style="left:1560px;top:109px;width:86px;height:24px;background:linear-gradient(#FFFFFF 0%,#FFFFFF 38%,#F4F5F7 44%,#F0F1F3 100%);border-right:1px solid #E2E3E5;border-bottom:1px solid #DADBDD;box-sizing:border-box;overflow:hidden"></div>
<div style="left:1646px;top:109px;width:87px;height:24px;background:linear-gradient(#FFFFFF 0%,#FFFFFF 38%,#F4F5F7 44%,#F0F1F3 100%);border-right:1px solid #E2E3E5;border-bottom:1px solid #DADBDD;box-sizing:border-box;overflow:hidden"></div>
<div style="left:1388px;top:109px;width:85px;height:24px;overflow:hidden">
<div class="t" style="left:6px;top:6.05px;font-size:12.4px;transform:scaleX(0.927);transform-origin:0 0">Address</div></div>
<div style="left:1474px;top:109px;width:85px;height:24px;overflow:hidden">
<div class="t" style="left:6px;top:6.05px;font-size:12.4px;transform:scaleX(0.927);transform-origin:0 0">Value</div></div>
<div style="left:1560px;top:109px;width:85px;height:24px;overflow:hidden">
<div class="t" style="left:6px;top:6.05px;font-size:12.4px;transform:scaleX(0.927);transform-origin:0 0">Units</div></div>
<div style="left:1646px;top:109px;width:86px;height:24px;overflow:hidden">
<div class="t" style="left:6px;top:6.05px;font-size:12.4px;transform:scaleX(0.927);transform-origin:0 0">Length</div></div>
<div style="left:1382px;top:133px;width:6px;height:19px;background:#F0F0F0;border-bottom:1px solid #E4E4E4;box-sizing:border-box"></div>
<div style="left:1388px;top:133px;width:345px;height:19px;background:#FFFFFF;border-bottom:1px solid #000;box-sizing:border-box"></div>
<div style="left:1473px;top:133px;width:1px;height:19px;background:#000"></div>
<div class="t" style="left:1391px;top:136.18px;font-size:12.3px;transform:scaleX(0.919);transform-origin:0 0">0xA438</div>
<div style="left:1559px;top:133px;width:1px;height:19px;background:#000"></div>
<div style="left:1475px;top:134px;width:83px;height:16px;background:#90EE90"></div>
<div class="t" style="left:1477px;top:136.18px;font-size:12.3px;transform:scaleX(0.919);transform-origin:0 0">2</div>
<div style="left:1645px;top:133px;width:1px;height:19px;background:#000"></div>
<div class="t" style="left:1563px;top:136.18px;font-size:12.3px;transform:scaleX(0.919);transform-origin:0 0">°C</div>
<div style="left:1732px;top:133px;width:1px;height:19px;background:#000"></div>
<div class="t" style="left:1649px;top:136.18px;font-size:12.3px;transform:scaleX(0.919);transform-origin:0 0">8-bit</div>
<div style="left:1382px;top:152px;width:6px;height:19px;background:#F0F0F0;border-bottom:1px solid #E4E4E4;box-sizing:border-box"></div>
<div style="left:1388px;top:152px;width:345px;height:19px;background:#F0FFFF;border-bottom:1px solid #000;box-sizing:border-box"></div>
<div style="left:1473px;top:152px;width:1px;height:19px;background:#000"></div>
<div class="t" style="left:1391px;top:155.18px;font-size:12.3px;transform:scaleX(0.919);transform-origin:0 0">0xA439</div>
<div style="left:1559px;top:152px;width:1px;height:19px;background:#000"></div>
<div style="left:1475px;top:153px;width:83px;height:16px;background:#90EE90"></div>
<div class="t" style="left:1477px;top:155.18px;font-size:12.3px;transform:scaleX(0.919);transform-origin:0 0">44</div>
<div style="left:1645px;top:152px;width:1px;height:19px;background:#000"></div>
<div class="t" style="left:1563px;top:155.18px;font-size:12.3px;transform:scaleX(0.919);transform-origin:0 0">°C</div>
<div style="left:1732px;top:152px;width:1px;height:19px;background:#000"></div>
<div class="t" style="left:1649px;top:155.18px;font-size:12.3px;transform:scaleX(0.919);transform-origin:0 0">16-bit</div>
<div style="left:1382px;top:171px;width:6px;height:19px;background:#F0F0F0;border-bottom:1px solid #E4E4E4;box-sizing:border-box"></div>
<div style="left:1388px;top:171px;width:345px;height:19px;background:#FFFFFF;border-bottom:1px solid #000;box-sizing:border-box"></div>
<div style="left:1473px;top:171px;width:1px;height:19px;background:#000"></div>
<div class="t" style="left:1391px;top:174.18px;font-size:12.3px;transform:scaleX(0.919);transform-origin:0 0">0xA43B</div>
<div style="left:1559px;top:171px;width:1px;height:19px;background:#000"></div>
<div style="left:1475px;top:172px;width:83px;height:16px;background:#90EE90"></div>
<div class="t" style="left:1477px;top:174.18px;font-size:12.3px;transform:scaleX(0.919);transform-origin:0 0">64</div>
<div style="left:1645px;top:171px;width:1px;height:19px;background:#000"></div>
<div class="t" style="left:1563px;top:174.18px;font-size:12.3px;transform:scaleX(0.919);transform-origin:0 0">°C</div>
<div style="left:1732px;top:171px;width:1px;height:19px;background:#000"></div>
<div class="t" style="left:1649px;top:174.18px;font-size:12.3px;transform:scaleX(0.919);transform-origin:0 0">16-bit</div>
<div style="left:1382px;top:190px;width:6px;height:19px;background:#F0F0F0;border-bottom:1px solid #E4E4E4;box-sizing:border-box"></div>
<div style="left:1388px;top:190px;width:345px;height:19px;background:#F0FFFF;border-bottom:1px solid #000;box-sizing:border-box"></div>
<div style="left:1473px;top:190px;width:1px;height:19px;background:#000"></div>
<div class="t" style="left:1391px;top:193.18px;font-size:12.3px;transform:scaleX(0.919);transform-origin:0 0">0xA43D</div>
<div style="left:1559px;top:190px;width:1px;height:19px;background:#000"></div>
<div style="left:1475px;top:191px;width:83px;height:16px;background:#90EE90"></div>
<div class="t" style="left:1477px;top:193.18px;font-size:12.3px;transform:scaleX(0.919);transform-origin:0 0">84</div>
<div style="left:1645px;top:190px;width:1px;height:19px;background:#000"></div>
<div class="t" style="left:1563px;top:193.18px;font-size:12.3px;transform:scaleX(0.919);transform-origin:0 0">°C</div>
<div style="left:1732px;top:190px;width:1px;height:19px;background:#000"></div>
<div class="t" style="left:1649px;top:193.18px;font-size:12.3px;transform:scaleX(0.919);transform-origin:0 0">16-bit</div>
<div style="left:1382px;top:209px;width:6px;height:19px;background:#F0F0F0;border-bottom:1px solid #E4E4E4;box-sizing:border-box"></div>
<div style="left:1388px;top:209px;width:345px;height:19px;background:#FFFFFF;border-bottom:1px solid #000;box-sizing:border-box"></div>
<div style="left:1473px;top:209px;width:1px;height:19px;background:#000"></div>
<div class="t" style="left:1391px;top:212.18px;font-size:12.3px;transform:scaleX(0.919);transform-origin:0 0">0xA43F</div>
<div style="left:1559px;top:209px;width:1px;height:19px;background:#000"></div>
<div style="left:1475px;top:210px;width:83px;height:16px;background:#90EE90"></div>
<div class="t" style="left:1477px;top:212.18px;font-size:12.3px;transform:scaleX(0.919);transform-origin:0 0">30</div>
<div style="left:1645px;top:209px;width:1px;height:19px;background:#000"></div>
<div class="t" style="left:1563px;top:212.18px;font-size:12.3px;transform:scaleX(0.919);transform-origin:0 0">%</div>
<div style="left:1732px;top:209px;width:1px;height:19px;background:#000"></div>
<div class="t" style="left:1649px;top:212.18px;font-size:12.3px;transform:scaleX(0.919);transform-origin:0 0">16-bit</div>
<div style="left:1382px;top:228px;width:6px;height:19px;background:#F0F0F0;border-bottom:1px solid #E4E4E4;box-sizing:border-box"></div>
<div style="left:1388px;top:228px;width:345px;height:19px;background:#F0FFFF;border-bottom:1px solid #000;box-sizing:border-box"></div>
<div style="left:1473px;top:228px;width:1px;height:19px;background:#000"></div>
<div class="t" style="left:1391px;top:231.18px;font-size:12.3px;transform:scaleX(0.919);transform-origin:0 0">0xA441</div>
<div style="left:1559px;top:228px;width:1px;height:19px;background:#000"></div>
<div style="left:1475px;top:229px;width:83px;height:16px;background:#90EE90"></div>
<div class="t" style="left:1477px;top:231.18px;font-size:12.3px;transform:scaleX(0.919);transform-origin:0 0">70</div>
<div style="left:1645px;top:228px;width:1px;height:19px;background:#000"></div>
<div class="t" style="left:1563px;top:231.18px;font-size:12.3px;transform:scaleX(0.919);transform-origin:0 0">%</div>
<div style="left:1732px;top:228px;width:1px;height:19px;background:#000"></div>
<div class="t" style="left:1649px;top:231.18px;font-size:12.3px;transform:scaleX(0.919);transform-origin:0 0">16-bit</div>
<div style="left:1382px;top:247px;width:6px;height:19px;background:#F0F0F0;border-bottom:1px solid #E4E4E4;box-sizing:border-box"></div>
<div style="left:1388px;top:247px;width:345px;height:19px;background:#FFFFFF;border-bottom:1px solid #000;box-sizing:border-box"></div>
<div style="left:1473px;top:247px;width:1px;height:19px;background:#000"></div>
<div class="t" style="left:1391px;top:250.18px;font-size:12.3px;transform:scaleX(0.919);transform-origin:0 0">0xA443</div>
<div style="left:1559px;top:247px;width:1px;height:19px;background:#000"></div>
<div style="left:1475px;top:248px;width:83px;height:16px;background:#90EE90"></div>
<div class="t" style="left:1477px;top:250.18px;font-size:12.3px;transform:scaleX(0.919);transform-origin:0 0">100</div>
<div style="left:1645px;top:247px;width:1px;height:19px;background:#000"></div>
<div class="t" style="left:1563px;top:250.18px;font-size:12.3px;transform:scaleX(0.919);transform-origin:0 0">%</div>
<div style="left:1732px;top:247px;width:1px;height:19px;background:#000"></div>
<div class="t" style="left:1649px;top:250.18px;font-size:12.3px;transform:scaleX(0.919);transform-origin:0 0">16-bit</div>
<div style="left:1382px;top:266px;width:6px;height:19px;background:#F0F0F0;border-bottom:1px solid #E4E4E4;box-sizing:border-box"></div>
<div style="left:1388px;top:266px;width:345px;height:19px;background:#F0FFFF;border-bottom:1px solid #000;box-sizing:border-box"></div>
<div style="left:1473px;top:266px;width:1px;height:19px;background:#000"></div>
<div class="t" style="left:1391px;top:269.18px;font-size:12.3px;transform:scaleX(0.919);transform-origin:0 0">0xA445</div>
<div style="left:1559px;top:266px;width:1px;height:19px;background:#000"></div>
<div style="left:1475px;top:267px;width:83px;height:16px;background:#90EE90"></div>
<div class="t" style="left:1477px;top:269.18px;font-size:12.3px;transform:scaleX(0.919);transform-origin:0 0">98</div>
<div style="left:1645px;top:266px;width:1px;height:19px;background:#000"></div>
<div class="t" style="left:1563px;top:269.18px;font-size:12.3px;transform:scaleX(0.919);transform-origin:0 0">°C</div>
<div style="left:1732px;top:266px;width:1px;height:19px;background:#000"></div>
<div class="t" style="left:1649px;top:269.18px;font-size:12.3px;transform:scaleX(0.919);transform-origin:0 0">16-bit</div>
<div style="left:1382px;top:285px;width:6px;height:19px;background:#F0F0F0;border-bottom:1px solid #E4E4E4;box-sizing:border-box"></div>
<div style="left:1388px;top:285px;width:345px;height:19px;background:#FFFFFF;border-bottom:1px solid #000;box-sizing:border-box"></div>
<div style="left:1473px;top:285px;width:1px;height:19px;background:#000"></div>
<div class="t" style="left:1391px;top:288.18px;font-size:12.3px;transform:scaleX(0.919);transform-origin:0 0">0xA447</div>
<div style="left:1559px;top:285px;width:1px;height:19px;background:#000"></div>
<div style="left:1475px;top:286px;width:83px;height:16px;background:#90EE90"></div>
<div class="t" style="left:1477px;top:288.18px;font-size:12.3px;transform:scaleX(0.919);transform-origin:0 0">0</div>
<div style="left:1645px;top:285px;width:1px;height:19px;background:#000"></div>
<div class="t" style="left:1563px;top:288.18px;font-size:12.3px;transform:scaleX(0.919);transform-origin:0 0">1/0</div>
<div style="left:1732px;top:285px;width:1px;height:19px;background:#000"></div>
<div class="t" style="left:1649px;top:288.18px;font-size:12.3px;transform:scaleX(0.919);transform-origin:0 0">8-bit</div>
<div style="left:1382px;top:304px;width:6px;height:19px;background:#F0F0F0;border-bottom:1px solid #E4E4E4;box-sizing:border-box"></div>
<div style="left:1388px;top:304px;width:345px;height:19px;background:#F0FFFF;border-bottom:1px solid #000;box-sizing:border-box"></div>
<div style="left:1473px;top:304px;width:1px;height:19px;background:#000"></div>
<div class="t" style="left:1391px;top:307.18px;font-size:12.3px;transform:scaleX(0.919);transform-origin:0 0">0xA448</div>
<div style="left:1559px;top:304px;width:1px;height:19px;background:#000"></div>
<div style="left:1475px;top:305px;width:83px;height:16px;background:#90EE90"></div>
<div class="t" style="left:1477px;top:307.18px;font-size:12.3px;transform:scaleX(0.919);transform-origin:0 0">55</div>
<div style="left:1645px;top:304px;width:1px;height:19px;background:#000"></div>
<div class="t" style="left:1563px;top:307.18px;font-size:12.3px;transform:scaleX(0.919);transform-origin:0 0">%</div>
<div style="left:1732px;top:304px;width:1px;height:19px;background:#000"></div>
<div class="t" style="left:1649px;top:307.18px;font-size:12.3px;transform:scaleX(0.919);transform-origin:0 0">8-bit</div>
<div class="t" style="right:380.7px;top:136.27px;font-size:12.4px;color:#000;text-align:right;transform:scaleX(0.927);transform-origin:100% 0">Temp. hysteresis:</div>
<div class="t" style="right:380.7px;top:155.27px;font-size:12.4px;color:#000;text-align:right;transform:scaleX(0.927);transform-origin:100% 0">Temp. target 1:</div>
<div class="t" style="right:380.7px;top:174.27px;font-size:12.4px;color:#000;text-align:right;transform:scaleX(0.927);transform-origin:100% 0">Temp. target 2:</div>
<div class="t" style="right:380.7px;top:193.27px;font-size:12.4px;color:#000;text-align:right;transform:scaleX(0.927);transform-origin:100% 0">Temp. target 3:</div>
<div class="t" style="right:380.7px;top:212.27px;font-size:12.4px;color:#000;text-align:right;transform:scaleX(0.927);transform-origin:100% 0">Fan speed 1:</div>
<div class="t" style="right:380.7px;top:231.27px;font-size:12.4px;color:#000;text-align:right;transform:scaleX(0.927);transform-origin:100% 0">Fan speed 2:</div>
<div class="t" style="right:380.7px;top:250.27px;font-size:12.4px;color:#000;text-align:right;transform:scaleX(0.927);transform-origin:100% 0">Fan speed 3:</div>
<div class="t" style="right:380.7px;top:269.27px;font-size:12.4px;color:#000;text-align:right;transform:scaleX(0.927);transform-origin:100% 0">Max temp.:</div>
<div class="t" style="right:380.7px;top:288.27px;font-size:12.4px;color:#000;text-align:right;transform:scaleX(0.927);transform-origin:100% 0">Fan control type:</div>
<div class="t" style="right:380.7px;top:307.27px;font-size:12.4px;color:#000;text-align:right;transform:scaleX(0.927);transform-origin:100% 0">PWM Fan max.:</div>
<div style="left:6px;top:6px;width:586px;height:800px;background:#fff;border:1px solid #1883D7;box-sizing:border-box"></div>
<div style="left:14px;top:13px;width:18px;height:18px"><svg style="display:block" width="18" height="18" viewBox="0 0 18 18"><path d="M7.6 7 C6.6 9.8 6.3 13.2 6.6 17 L9.4 17 C8.9 13.5 9 10 10.3 7 Z" fill="#C9641A"/><path d="M8.6 7.6 C7.9 10.3 7.7 13.5 7.9 16.6" stroke="#F2A646" stroke-width="1" fill="none"/><g fill="none" stroke-linecap="round"><path d="M8.8 6.2 Q4 3.6 1.3 7.4" stroke="#1F8A34" stroke-width="2"/><path d="M8.6 5.8 Q5.5 2.4 2.8 3.3" stroke="#3DA64E" stroke-width="1.8"/><path d="M8.9 6 Q8.3 2.6 6.6 1.3" stroke="#228C36" stroke-width="1.9"/><path d="M9 6 Q12.6 3.2 16.2 7.6" stroke="#1F8A34" stroke-width="2"/><path d="M9.2 6.4 Q13 6 14.6 10" stroke="#1A7F2E" stroke-width="1.9"/><path d="M9 6 Q11 3 13 3.4" stroke="#45AE55" stroke-width="1.5"/></g></svg></div>
<div class="t" style="left:36.4px;top:14.67px;font-size:12.4px;color:#000;transform:scaleX(0.887);transform-origin:0 0;">Hawaii Bios Reader 2.1.5982.24843</div>
<div style="left:472px;top:21px;width:10px;height:1px;background:#000"></div>
<div style="left:517px;top:16px;width:10px;height:10px;border:1px solid #CCCCCC;box-sizing:border-box"></div>
<div style="left:562px;top:15px;width:12px;height:12px"><svg style="display:block" width="12" height="12" viewBox="0 0 12 12"><path d="M1 1 L11 11 M11 1 L1 11" stroke="#000" stroke-width="1.05" fill="none"/></svg></div>
<div style="left:17px;top:47px;width:60px;height:20px;background:#DDDDDD;border:1px solid #707070;box-sizing:border-box;box-shadow:inset 0 0 0 1px #E6E6E6"></div>
<div class="t" style="left:-103.0px;width:300px;top:50.87px;font-size:12.4px;color:#000;text-align:center;transform:scaleX(0.927);transform-origin:50% 0">Open File</div>
<div style="left:93px;top:47px;width:60px;height:20px;background:#DDDDDD;border:1px solid #707070;box-sizing:border-box;box-shadow:inset 0 0 0 1px #E6E6E6"></div>
<div class="t" style="left:-27.0px;width:300px;top:50.87px;font-size:12.4px;color:#000;text-align:center;transform:scaleX(0.927);transform-origin:50% 0">Save File</div>
<div class="t" style="left:172.6px;top:49.67px;font-size:12.4px;color:#000;transform:scaleX(0.927);transform-origin:0 0;">Bios name:</div>
<div style="left:253px;top:47px;width:306px;height:20px;border:1px solid #ABADB3;box-sizing:border-box;background:#fff"></div>
<div class="t" style="left:256.6px;top:49.67px;font-size:12.4px;color:#000;transform:scaleX(0.927);transform-origin:0 0;letter-spacing:-0.4px">MS-V30823-F5▯GRENADA▯PCI_EXPRESS</div>
<div style="left:17px;top:106px;width:564px;height:682px;border:1px solid #ACACAC;box-sizing:border-box;background:#fff"></div>
<div style="left:20px;top:79px;width:60px;height:28px;background:linear-gradient(#F0F0F0,#E5E5E5);border:1px solid #ACACAC;box-sizing:border-box"></div>
<div class="t" style="left:-100.0px;width:300px;top:85.87px;font-size:12.4px;color:#000;text-align:center;transform:scaleX(0.927);transform-origin:50% 0">Overview</div>
<div style="left:146px;top:79px;width:74px;height:28px;background:linear-gradient(#F0F0F0,#E5E5E5);border:1px solid #ACACAC;box-sizing:border-box"></div>
<div class="t" style="left:33.0px;width:300px;top:85.87px;font-size:12.4px;color:#000;text-align:center;transform:scaleX(0.927);transform-origin:50% 0">Limit Tables</div>
<div style="left:219px;top:79px;width:69px;height:28px;background:linear-gradient(#F0F0F0,#E5E5E5);border:1px solid #ACACAC;box-sizing:border-box"></div>
<div class="t" style="left:103.5px;width:300px;top:85.87px;font-size:12.4px;color:#000;text-align:center;transform:scaleX(0.927);transform-origin:50% 0">Fan profile</div>
<div style="left:287px;top:79px;width:83px;height:28px;background:linear-gradient(#F0F0F0,#E5E5E5);border:1px solid #ACACAC;box-sizing:border-box"></div>
<div class="t" style="left:178.5px;width:300px;top:85.87px;font-size:12.4px;color:#000;text-align:center;transform:scaleX(0.927);transform-origin:50% 0">VRM settings</div>
<div style="left:369px;top:79px;width:46px;height:28px;background:linear-gradient(#F0F0F0,#E5E5E5);border:1px solid #ACACAC;box-sizing:border-box"></div>
<div class="t" style="left:242.0px;width:300px;top:85.87px;font-size:12.4px;color:#000;text-align:center;transform:scaleX(0.927);transform-origin:50% 0">About</div>
<div style="left:78px;top:77px;width:70px;height:30px;background:#fff;border:1px solid #ACACAC;border-radius:2px 2px 0 0;box-sizing:border-box"></div>
<div class="t" style="left:-36.8px;width:300px;top:83.87px;font-size:12.4px;color:#000;text-align:center;transform:scaleX(0.927);transform-origin:50% 0">PowerPlay</div>
<div style="left:118px;top:111px;width:270px;height:223px;border:1px solid #688CAF;box-sizing:border-box;background:#F0F0F0"></div>
<div style="left:119px;top:112px;width:6px;height:24px;background:#EFEFEF;border-bottom:1px solid #E4E4E4;box-sizing:border-box"></div>
<div style="left:125px;top:112px;width:66px;height:24px;background:linear-gradient(#FFFFFF 0%,#FFFFFF 38%,#F4F5F7 44%,#F0F1F3 100%);border-right:1px solid #E2E3E5;border-bottom:1px solid #DADBDD;box-sizing:border-box;overflow:hidden"></div>
<div style="left:191px;top:112px;width:65px;height:24px;background:linear-gradient(#FFFFFF 0%,#FFFFFF 38%,#F4F5F7 44%,#F0F1F3 100%);border-right:1px solid #E2E3E5;border-bottom:1px solid #DADBDD;box-sizing:border-box;overflow:hidden"></div>
<div style="left:256px;top:112px;width:66px;height:24px;background:linear-gradient(#FFFFFF 0%,#FFFFFF 38%,#F4F5F7 44%,#F0F1F3 100%);border-right:1px solid #E2E3E5;border-bottom:1px solid #DADBDD;box-sizing:border-box;overflow:hidden"></div>
<div style="left:322px;top:112px;width:65px;height:24px;background:linear-gradient(#FFFFFF 0%,#FFFFFF 38%,#F4F5F7 44%,#F0F1F3 100%);border-right:1px solid #E2E3E5;border-bottom:1px solid #DADBDD;box-sizing:border-box;overflow:hidden"></div>
<div style="left:125px;top:112px;width:65px;height:24px;overflow:hidden">
<div class="t" style="left:6px;top:6.05px;font-size:12.4px;transform:scaleX(0.927);transform-origin:0 0">Address</div></div>
<div style="left:191px;top:112px;width:64px;height:24px;overflow:hidden">
<div class="t" style="left:6px;top:6.05px;font-size:12.4px;transform:scaleX(0.927);transform-origin:0 0">Value</div></div>
<div style="left:256px;top:112px;width:65px;height:24px;overflow:hidden">
<div class="t" style="left:6px;top:6.05px;font-size:12.4px;transform:scaleX(0.927);transform-origin:0 0">Units</div></div>
<div style="left:322px;top:112px;width:64px;height:24px;overflow:hidden">
<div class="t" style="left:6px;top:6.05px;font-size:12.4px;transform:scaleX(0.927);transform-origin:0 0">Length</div></div>
<div style="left:119px;top:136px;width:6px;height:19px;background:#F0F0F0;border-bottom:1px solid #E4E4E4;box-sizing:border-box"></div>
<div style="left:125px;top:136px;width:262px;height:19px;background:#FFFFFF;border-bottom:1px solid #000;box-sizing:border-box"></div>
<div style="left:190px;top:136px;width:1px;height:19px;background:#000"></div>
<div style="left:125px;top:136px;width:65px;height:18px;border:1px solid #000;box-sizing:border-box"></div>
<div class="t" style="left:128px;top:139.18px;font-size:12.3px;transform:scaleX(0.919);transform-origin:0 0">0xA3EA</div>
<div style="left:255px;top:136px;width:1px;height:19px;background:#000"></div>
<div style="left:192px;top:137px;width:62px;height:16px;background:#90EE90"></div>
<div class="t" style="left:194px;top:139.18px;font-size:12.3px;transform:scaleX(0.919);transform-origin:0 0">1100</div>
<div style="left:321px;top:136px;width:1px;height:19px;background:#000"></div>
<div class="t" style="left:259px;top:139.18px;font-size:12.3px;transform:scaleX(0.919);transform-origin:0 0">Mhz</div>
<div style="left:386px;top:136px;width:1px;height:19px;background:#000"></div>
<div class="t" style="left:325px;top:139.18px;font-size:12.3px;transform:scaleX(0.919);transform-origin:0 0">24-bit</div>
<div style="left:119px;top:155px;width:6px;height:19px;background:#F0F0F0;border-bottom:1px solid #E4E4E4;box-sizing:border-box"></div>
<div style="left:125px;top:155px;width:262px;height:19px;background:#F0FFFF;border-bottom:1px solid #000;box-sizing:border-box"></div>
<div style="left:190px;top:155px;width:1px;height:19px;background:#000"></div>
<div class="t" style="left:128px;top:158.18px;font-size:12.3px;transform:scaleX(0.919);transform-origin:0 0">0xA3F3</div>
<div style="left:255px;top:155px;width:1px;height:19px;background:#000"></div>
<div style="left:192px;top:156px;width:62px;height:16px;background:#90EE90"></div>
<div class="t" style="left:194px;top:158.18px;font-size:12.3px;transform:scaleX(0.919);transform-origin:0 0">735</div>
<div style="left:321px;top:155px;width:1px;height:19px;background:#000"></div>
<div class="t" style="left:259px;top:158.18px;font-size:12.3px;transform:scaleX(0.919);transform-origin:0 0">Mhz</div>
<div style="left:386px;top:155px;width:1px;height:19px;background:#000"></div>
<div class="t" style="left:325px;top:158.18px;font-size:12.3px;transform:scaleX(0.919);transform-origin:0 0">24-bit</div>
<div style="left:119px;top:174px;width:6px;height:19px;background:#F0F0F0;border-bottom:1px solid #E4E4E4;box-sizing:border-box"></div>
<div style="left:125px;top:174px;width:262px;height:19px;background:#FFFFFF;border-bottom:1px solid #000;box-sizing:border-box"></div>
<div style="left:190px;top:174px;width:1px;height:19px;background:#000"></div>
<div class="t" style="left:128px;top:177.18px;font-size:12.3px;transform:scaleX(0.919);transform-origin:0 0">0xA3FC</div>
<div style="left:255px;top:174px;width:1px;height:19px;background:#000"></div>
<div style="left:192px;top:175px;width:62px;height:16px;background:#90EE90"></div>
<div class="t" style="left:194px;top:177.18px;font-size:12.3px;transform:scaleX(0.919);transform-origin:0 0">300</div>
<div style="left:321px;top:174px;width:1px;height:19px;background:#000"></div>
<div class="t" style="left:259px;top:177.18px;font-size:12.3px;transform:scaleX(0.919);transform-origin:0 0">Mhz</div>
<div style="left:386px;top:174px;width:1px;height:19px;background:#000"></div>
<div class="t" style="left:325px;top:177.18px;font-size:12.3px;transform:scaleX(0.919);transform-origin:0 0">24-bit</div>
<div style="left:119px;top:193px;width:6px;height:19px;background:#F0F0F0;border-bottom:1px solid #E4E4E4;box-sizing:border-box"></div>
<div style="left:125px;top:193px;width:262px;height:19px;background:#F0FFFF;border-bottom:1px solid #000;box-sizing:border-box"></div>
<div style="left:190px;top:193px;width:1px;height:19px;background:#000"></div>
<div class="t" style="left:128px;top:196.18px;font-size:12.3px;transform:scaleX(0.919);transform-origin:0 0">0xA3ED</div>
<div style="left:255px;top:193px;width:1px;height:19px;background:#000"></div>
<div style="left:192px;top:194px;width:62px;height:16px;background:#90EE90"></div>
<div class="t" style="left:194px;top:196.18px;font-size:12.3px;transform:scaleX(0.919);transform-origin:0 0">1625</div>
<div style="left:321px;top:193px;width:1px;height:19px;background:#000"></div>
<div class="t" style="left:259px;top:196.18px;font-size:12.3px;transform:scaleX(0.919);transform-origin:0 0">Mhz</div>
<div style="left:386px;top:193px;width:1px;height:19px;background:#000"></div>
<div class="t" style="left:325px;top:196.18px;font-size:12.3px;transform:scaleX(0.919);transform-origin:0 0">24-bit</div>
<div style="left:119px;top:212px;width:6px;height:19px;background:#F0F0F0;border-bottom:1px solid #E4E4E4;box-sizing:border-box"></div>
<div style="left:125px;top:212px;width:262px;height:19px;background:#FFFFFF;border-bottom:1px solid #000;box-sizing:border-box"></div>
<div style="left:190px;top:212px;width:1px;height:19px;background:#000"></div>
<div class="t" style="left:128px;top:215.18px;font-size:12.3px;transform:scaleX(0.919);transform-origin:0 0">0xA3F6</div>
<div style="left:255px;top:212px;width:1px;height:19px;background:#000"></div>
<div style="left:192px;top:213px;width:62px;height:16px;background:#90EE90"></div>
<div class="t" style="left:194px;top:215.18px;font-size:12.3px;transform:scaleX(0.919);transform-origin:0 0">1500</div>
<div style="left:321px;top:212px;width:1px;height:19px;background:#000"></div>
<div class="t" style="left:259px;top:215.18px;font-size:12.3px;transform:scaleX(0.919);transform-origin:0 0">Mhz</div>
<div style="left:386px;top:212px;width:1px;height:19px;background:#000"></div>
<div class="t" style="left:325px;top:215.18px;font-size:12.3px;transform:scaleX(0.919);transform-origin:0 0">24-bit</div>
<div style="left:119px;top:231px;width:6px;height:19px;background:#F0F0F0;border-bottom:1px solid #E4E4E4;box-sizing:border-box"></div>
<div style="left:125px;top:231px;width:262px;height:19px;background:#F0FFFF;border-bottom:1px solid #000;box-sizing:border-box"></div>
<div style="left:190px;top:231px;width:1px;height:19px;background:#000"></div>
<div class="t" style="left:128px;top:234.18px;font-size:12.3px;transform:scaleX(0.919);transform-origin:0 0">0xA3FF</div>
<div style="left:255px;top:231px;width:1px;height:19px;background:#000"></div>
<div style="left:192px;top:232px;width:62px;height:16px;background:#90EE90"></div>
<div class="t" style="left:194px;top:234.18px;font-size:12.3px;transform:scaleX(0.919);transform-origin:0 0">150</div>
<div style="left:321px;top:231px;width:1px;height:19px;background:#000"></div>
<div class="t" style="left:259px;top:234.18px;font-size:12.3px;transform:scaleX(0.919);transform-origin:0 0">Mhz</div>
<div style="left:386px;top:231px;width:1px;height:19px;background:#000"></div>
<div class="t" style="left:325px;top:234.18px;font-size:12.3px;transform:scaleX(0.919);transform-origin:0 0">24-bit</div>
<div style="left:119px;top:250px;width:6px;height:19px;background:#F0F0F0;border-bottom:1px solid #E4E4E4;box-sizing:border-box"></div>
<div style="left:125px;top:250px;width:262px;height:19px;background:#FFFFFF;border-bottom:1px solid #000;box-sizing:border-box"></div>
<div style="left:190px;top:250px;width:1px;height:19px;background:#000"></div>
<div class="t" style="left:128px;top:253.18px;font-size:12.3px;transform:scaleX(0.919);transform-origin:0 0">0xA600</div>
<div style="left:255px;top:250px;width:1px;height:19px;background:#000"></div>
<div style="left:192px;top:251px;width:62px;height:16px;background:#90EE90"></div>
<div class="t" style="left:194px;top:253.18px;font-size:12.3px;transform:scaleX(0.919);transform-origin:0 0">235</div>
<div style="left:321px;top:250px;width:1px;height:19px;background:#000"></div>
<div class="t" style="left:259px;top:253.18px;font-size:12.3px;transform:scaleX(0.919);transform-origin:0 0">W</div>
<div style="left:386px;top:250px;width:1px;height:19px;background:#000"></div>
<div class="t" style="left:325px;top:253.18px;font-size:12.3px;transform:scaleX(0.919);transform-origin:0 0">16-bit</div>
<div style="left:119px;top:269px;width:6px;height:19px;background:#F0F0F0;border-bottom:1px solid #E4E4E4;box-sizing:border-box"></div>
<div style="left:125px;top:269px;width:262px;height:19px;background:#F0FFFF;border-bottom:1px solid #000;box-sizing:border-box"></div>
<div style="left:190px;top:269px;width:1px;height:19px;background:#000"></div>
<div class="t" style="left:128px;top:272.18px;font-size:12.3px;transform:scaleX(0.919);transform-origin:0 0">0xA60C</div>
<div style="left:255px;top:269px;width:1px;height:19px;background:#000"></div>
<div style="left:192px;top:270px;width:62px;height:16px;background:#90EE90"></div>
<div class="t" style="left:194px;top:272.18px;font-size:12.3px;transform:scaleX(0.919);transform-origin:0 0">250</div>
<div style="left:321px;top:269px;width:1px;height:19px;background:#000"></div>
<div class="t" style="left:259px;top:272.18px;font-size:12.3px;transform:scaleX(0.919);transform-origin:0 0">W</div>
<div style="left:386px;top:269px;width:1px;height:19px;background:#000"></div>
<div class="t" style="left:325px;top:272.18px;font-size:12.3px;transform:scaleX(0.919);transform-origin:0 0">16-bit</div>
<div style="left:119px;top:288px;width:6px;height:19px;background:#F0F0F0;border-bottom:1px solid #E4E4E4;box-sizing:border-box"></div>
<div style="left:125px;top:288px;width:262px;height:19px;background:#FFFFFF;border-bottom:1px solid #000;box-sizing:border-box"></div>
<div style="left:190px;top:288px;width:1px;height:19px;background:#000"></div>
<div class="t" style="left:128px;top:291.18px;font-size:12.3px;transform:scaleX(0.919);transform-origin:0 0">0xA602</div>
<div style="left:255px;top:288px;width:1px;height:19px;background:#000"></div>
<div style="left:192px;top:289px;width:62px;height:16px;background:#90EE90"></div>
<div class="t" style="left:194px;top:291.18px;font-size:12.3px;transform:scaleX(0.919);transform-origin:0 0">208</div>
<div style="left:321px;top:288px;width:1px;height:19px;background:#000"></div>
<div class="t" style="left:259px;top:291.18px;font-size:12.3px;transform:scaleX(0.919);transform-origin:0 0">A</div>
<div style="left:386px;top:288px;width:1px;height:19px;background:#000"></div>
<div class="t" style="left:325px;top:291.18px;font-size:12.3px;transform:scaleX(0.919);transform-origin:0 0">16-bit</div>
<div style="left:119px;top:307px;width:6px;height:19px;background:#F0F0F0;border-bottom:1px solid #E4E4E4;box-sizing:border-box"></div>
<div style="left:125px;top:307px;width:262px;height:19px;background:#F0FFFF;border-bottom:1px solid #000;box-sizing:border-box"></div>
<div style="left:190px;top:307px;width:1px;height:19px;background:#000"></div>
<div class="t" style="left:128px;top:310.18px;font-size:12.3px;transform:scaleX(0.919);transform-origin:0 0">0xA60E</div>
<div style="left:255px;top:307px;width:1px;height:19px;background:#000"></div>
<div style="left:192px;top:308px;width:62px;height:16px;background:#90EE90"></div>
<div class="t" style="left:194px;top:310.18px;font-size:12.3px;transform:scaleX(0.919);transform-origin:0 0">95</div>
<div style="left:321px;top:307px;width:1px;height:19px;background:#000"></div>
<div class="t" style="left:259px;top:310.18px;font-size:12.3px;transform:scaleX(0.919);transform-origin:0 0">°C</div>
<div style="left:386px;top:307px;width:1px;height:19px;background:#000"></div>
<div class="t" style="left:325px;top:310.18px;font-size:12.3px;transform:scaleX(0.919);transform-origin:0 0">16-bit</div>
<div class="t" style="right:1643.0px;top:139.67px;font-size:12.4px;color:#000;text-align:right;transform:scaleX(0.927);transform-origin:100% 0">GPU Clock 1:</div>
<div class="t" style="right:1643.0px;top:158.67px;font-size:12.4px;color:#000;text-align:right;transform:scaleX(0.927);transform-origin:100% 0">GPU Clock 2:</div>
<div class="t" style="right:1643.0px;top:177.67px;font-size:12.4px;color:#000;text-align:right;transform:scaleX(0.927);transform-origin:100% 0">GPU Clock 3:</div>
<div class="t" style="right:1643.0px;top:196.67px;font-size:12.4px;color:#000;text-align:right;transform:scaleX(0.927);transform-origin:100% 0">MEM Clock 1:</div>
<div class="t" style="right:1643.0px;top:215.67px;font-size:12.4px;color:#000;text-align:right;transform:scaleX(0.927);transform-origin:100% 0">MEM Clock 2:</div>
<div class="t" style="right:1643.0px;top:234.67px;font-size:12.4px;color:#000;text-align:right;transform:scaleX(0.927);transform-origin:100% 0">MEM Clock 3:</div>
<div class="t" style="right:1643.0px;top:253.67px;font-size:12.4px;color:#000;text-align:right;transform:scaleX(0.927);transform-origin:100% 0">TDP Max:</div>
<div class="t" style="right:1643.0px;top:272.67px;font-size:12.4px;color:#000;text-align:right;transform:scaleX(0.927);transform-origin:100% 0">Power limit:</div>
<div class="t" style="right:1643.0px;top:291.67px;font-size:12.4px;color:#000;text-align:right;transform:scaleX(0.927);transform-origin:100% 0">TDC limit:</div>
<div class="t" style="right:1643.0px;top:310.67px;font-size:12.4px;color:#000;text-align:right;transform:scaleX(0.927);transform-origin:100% 0">Max. ASIC Temp.:</div>
<div class="t" style="left:340.5px;width:300px;top:120.67px;font-size:12.4px;color:#000;text-align:center;transform:scaleX(0.927);transform-origin:50% 0">MEM Max Clock:</div>
<div style="left:416px;top:139px;width:152px;height:18px;border:1px solid #ABADB3;box-sizing:border-box;background:#fff"></div>
<div class="t" style="left:419.3px;top:141.47px;font-size:12.4px;color:#000;transform:scaleX(0.927);transform-origin:0 0;">0xA45C -- 2000 Mhz</div>
<div class="t" style="left:338.5px;width:300px;top:180.87px;font-size:12.4px;color:#000;text-align:center;transform:scaleX(0.927);transform-origin:50% 0">GPU Max Clock:</div>
<div style="left:416px;top:199px;width:152px;height:18px;border:1px solid #ABADB3;box-sizing:border-box;background:#fff"></div>
<div class="t" style="left:419.3px;top:201.47px;font-size:12.4px;color:#000;transform:scaleX(0.927);transform-origin:0 0;">0xA458 -- 1500 Mhz</div>
<div class="t" style="right:1535.5px;top:359.57px;font-size:12.4px;color:#000;text-align:right;transform:scaleX(0.927);transform-origin:100% 0">VDDCI States:</div>
<div style="left:225px;top:345px;width:343px;height:48px;border:1px solid #688CAF;box-sizing:border-box;background:#F0F0F0"></div>
<div style="left:226px;top:346px;width:6px;height:24px;background:#EFEFEF;border-bottom:1px solid #E4E4E4;box-sizing:border-box"></div>
<div style="left:232px;top:346px;width:48px;height:24px;background:linear-gradient(#FFFFFF 0%,#FFFFFF 38%,#F4F5F7 44%,#F0F1F3 100%);border-right:1px solid #E2E3E5;border-bottom:1px solid #DADBDD;box-sizing:border-box;overflow:hidden"></div>
<div style="left:280px;top:346px;width:48px;height:24px;background:linear-gradient(#FFFFFF 0%,#FFFFFF 38%,#F4F5F7 44%,#F0F1F3 100%);border-right:1px solid #E2E3E5;border-bottom:1px solid #DADBDD;box-sizing:border-box;overflow:hidden"></div>
<div style="left:328px;top:346px;width:47px;height:24px;background:linear-gradient(#FFFFFF 0%,#FFFFFF 38%,#F4F5F7 44%,#F0F1F3 100%);border-right:1px solid #E2E3E5;border-bottom:1px solid #DADBDD;box-sizing:border-box;overflow:hidden"></div>
<div style="left:375px;top:346px;width:48px;height:24px;background:linear-gradient(#FFFFFF 0%,#FFFFFF 38%,#F4F5F7 44%,#F0F1F3 100%);border-right:1px solid #E2E3E5;border-bottom:1px solid #DADBDD;box-sizing:border-box;overflow:hidden"></div>
<div style="left:423px;top:346px;width:48px;height:24px;background:linear-gradient(#FFFFFF 0%,#FFFFFF 38%,#F4F5F7 44%,#F0F1F3 100%);border-right:1px solid #E2E3E5;border-bottom:1px solid #DADBDD;box-sizing:border-box;overflow:hidden"></div>
<div style="left:471px;top:346px;width:47px;height:24px;background:linear-gradient(#FFFFFF 0%,#FFFFFF 38%,#F4F5F7 44%,#F0F1F3 100%);border-right:1px solid #E2E3E5;border-bottom:1px solid #DADBDD;box-sizing:border-box;overflow:hidden"></div>
<div style="left:518px;top:346px;width:48px;height:24px;background:linear-gradient(#FFFFFF 0%,#FFFFFF 38%,#F4F5F7 44%,#F0F1F3 100%);border-right:1px solid #E2E3E5;border-bottom:1px solid #DADBDD;box-sizing:border-box;overflow:hidden"></div>
<div style="left:232px;top:346px;width:47px;height:24px;overflow:hidden">
<div class="t" style="left:5px;top:6.05px;font-size:12.4px;transform:scaleX(0.927);transform-origin:0 0">DPM</div></div>
<div style="left:280px;top:346px;width:47px;height:24px;overflow:hidden">
<div class="t" style="left:5px;top:6.05px;font-size:12.4px;transform:scaleX(0.927);transform-origin:0 0">Addres</div></div>
<div style="left:328px;top:346px;width:46px;height:24px;overflow:hidden">
<div class="t" style="left:5px;top:6.05px;font-size:12.4px;transform:scaleX(0.927);transform-origin:0 0">Value</div></div>
<div style="left:375px;top:346px;width:47px;height:24px;overflow:hidden">
<div class="t" style="left:5px;top:6.05px;font-size:12.4px;transform:scaleX(0.927);transform-origin:0 0">Units</div></div>
<div style="left:423px;top:346px;width:47px;height:24px;overflow:hidden">
<div class="t" style="left:5px;top:6.05px;font-size:12.4px;transform:scaleX(0.927);transform-origin:0 0">Length</div></div>
<div style="left:471px;top:346px;width:46px;height:24px;overflow:hidden">
<div class="t" style="left:5px;top:6.05px;font-size:12.4px;transform:scaleX(0.927);transform-origin:0 0">AdrVolt</div></div>
<div style="left:518px;top:346px;width:47px;height:24px;overflow:hidden">
<div class="t" style="left:5px;top:6.05px;font-size:12.4px;transform:scaleX(0.927);transform-origin:0 0">Voltage</div></div>
<div style="left:226px;top:370px;width:6px;height:19px;background:#F0F0F0;border-bottom:1px solid #E4E4E4;box-sizing:border-box"></div>
<div style="left:232px;top:370px;width:334px;height:19px;background:#FFFFFF;border-bottom:1px solid #000;box-sizing:border-box"></div>
<div style="left:279px;top:370px;width:1px;height:19px;background:#000"></div>
<div class="t" style="left:235px;top:372.88px;font-size:12.3px;transform:scaleX(0.919);transform-origin:0 0">0</div>
<div style="left:327px;top:370px;width:1px;height:19px;background:#000"></div>
<div class="t" style="left:283px;top:372.88px;font-size:12.3px;transform:scaleX(0.919);transform-origin:0 0">0xA498</div>
<div style="left:374px;top:370px;width:1px;height:19px;background:#000"></div>
<div style="left:329px;top:371px;width:44px;height:16px;background:#90EE90"></div>
<div class="t" style="left:331px;top:372.88px;font-size:12.3px;transform:scaleX(0.919);transform-origin:0 0">1625</div>
<div style="left:422px;top:370px;width:1px;height:19px;background:#000"></div>
<div class="t" style="left:378px;top:372.88px;font-size:12.3px;transform:scaleX(0.919);transform-origin:0 0">Mhz</div>
<div style="left:470px;top:370px;width:1px;height:19px;background:#000"></div>
<div class="t" style="left:426px;top:372.88px;font-size:12.3px;transform:scaleX(0.919);transform-origin:0 0">24-bit</div>
<div style="left:518px;top:370px;width:0px;height:19px;background:#000"></div>
<div class="t" style="left:474px;top:372.88px;font-size:12.3px;transform:scaleX(0.919);transform-origin:0 0">0xA49B</div>
<div style="left:565px;top:370px;width:1px;height:19px;background:#000"></div>
<div style="left:520px;top:371px;width:44px;height:16px;background:#90EE90"></div>
<div class="t" style="left:521px;top:372.88px;font-size:12.3px;transform:scaleX(0.919);transform-origin:0 0">1012</div>
<div class="t" style="left:30.4px;top:386.67px;font-size:12.4px;color:#000;transform:scaleX(0.927);transform-origin:0 0;">GPU Freq Table (voltage edit):</div>
<div style="left:30px;top:403px;width:538px;height:177px;border:1px solid #688CAF;box-sizing:border-box;background:#F0F0F0"></div>
<div style="left:31px;top:404px;width:6px;height:23px;background:#EFEFEF;border-bottom:1px solid #E4E4E4;box-sizing:border-box"></div>
<div style="left:37px;top:404px;width:76px;height:23px;background:linear-gradient(#FFFFFF 0%,#FFFFFF 38%,#F4F5F7 44%,#F0F1F3 100%);border-right:1px solid #E2E3E5;border-bottom:1px solid #DADBDD;box-sizing:border-box;overflow:hidden"></div>
<div style="left:113px;top:404px;width:75px;height:23px;background:linear-gradient(#FFFFFF 0%,#FFFFFF 38%,#F4F5F7 44%,#F0F1F3 100%);border-right:1px solid #E2E3E5;border-bottom:1px solid #DADBDD;box-sizing:border-box;overflow:hidden"></div>
<div style="left:188px;top:404px;width:76px;height:23px;background:linear-gradient(#FFFFFF 0%,#FFFFFF 38%,#F4F5F7 44%,#F0F1F3 100%);border-right:1px solid #E2E3E5;border-bottom:1px solid #DADBDD;box-sizing:border-box;overflow:hidden"></div>
<div style="left:264px;top:404px;width:75px;height:23px;background:linear-gradient(#FFFFFF 0%,#FFFFFF 38%,#F4F5F7 44%,#F0F1F3 100%);border-right:1px solid #E2E3E5;border-bottom:1px solid #DADBDD;box-sizing:border-box;overflow:hidden"></div>
<div style="left:339px;top:404px;width:76px;height:23px;background:linear-gradient(#FFFFFF 0%,#FFFFFF 38%,#F4F5F7 44%,#F0F1F3 100%);border-right:1px solid #E2E3E5;border-bottom:1px solid #DADBDD;box-sizing:border-box;overflow:hidden"></div>
<div style="left:415px;top:404px;width:76px;height:23px;background:linear-gradient(#FFFFFF 0%,#FFFFFF 38%,#F4F5F7 44%,#F0F1F3 100%);border-right:1px solid #E2E3E5;border-bottom:1px solid #DADBDD;box-sizing:border-box;overflow:hidden"></div>
<div style="left:491px;top:404px;width:75px;height:23px;background:linear-gradient(#FFFFFF 0%,#FFFFFF 38%,#F4F5F7 44%,#F0F1F3 100%);border-right:1px solid #E2E3E5;border-bottom:1px solid #DADBDD;box-sizing:border-box;overflow:hidden"></div>
<div style="left:37px;top:404px;width:75px;height:23px;overflow:hidden">
<div class="t" style="left:5px;top:5.40px;font-size:11.3px;transform:scaleX(0.93);transform-origin:0 0">DPM</div></div>
<div style="left:113px;top:404px;width:74px;height:23px;overflow:hidden">
<div class="t" style="left:5px;top:5.40px;font-size:11.3px;transform:scaleX(0.93);transform-origin:0 0">Address</div></div>
<div style="left:188px;top:404px;width:75px;height:23px;overflow:hidden">
<div class="t" style="left:5px;top:5.40px;font-size:11.3px;transform:scaleX(0.93);transform-origin:0 0">Value</div></div>
<div style="left:264px;top:404px;width:74px;height:23px;overflow:hidden">
<div class="t" style="left:5px;top:5.40px;font-size:11.3px;transform:scaleX(0.93);transform-origin:0 0">Units</div></div>
<div style="left:339px;top:404px;width:75px;height:23px;overflow:hidden">
<div class="t" style="left:5px;top:5.40px;font-size:11.3px;transform:scaleX(0.93);transform-origin:0 0">Length</div></div>
<div style="left:415px;top:404px;width:75px;height:23px;overflow:hidden">
<div class="t" style="left:5px;top:5.40px;font-size:11.3px;transform:scaleX(0.93);transform-origin:0 0">AdrVoltage</div></div>
<div style="left:491px;top:404px;width:74px;height:23px;overflow:hidden">
<div class="t" style="left:5px;top:5.40px;font-size:11.3px;transform:scaleX(0.93);transform-origin:0 0">Voltage</div></div>
<div style="left:31px;top:427px;width:6px;height:18px;background:#F0F0F0;border-bottom:1px solid #E4E4E4;box-sizing:border-box"></div>
<div style="left:37px;top:427px;width:529px;height:18px;background:#FFFFFF;border-bottom:1px solid #000;box-sizing:border-box"></div>
<div style="left:112px;top:427px;width:1px;height:18px;background:#000"></div>
<div class="t" style="left:40px;top:429.85px;font-size:11.0px;transform:scaleX(0.927);transform-origin:0 0">0</div>
<div style="left:187px;top:427px;width:1px;height:18px;background:#000"></div>
<div class="t" style="left:116px;top:429.85px;font-size:11.0px;transform:scaleX(0.927);transform-origin:0 0">0xA46F</div>
<div style="left:263px;top:427px;width:1px;height:18px;background:#000"></div>
<div style="left:189px;top:428px;width:73px;height:15px;background:#90EE90"></div>
<div class="t" style="left:191px;top:429.85px;font-size:11.0px;transform:scaleX(0.927);transform-origin:0 0">300</div>
<div style="left:338px;top:427px;width:1px;height:18px;background:#000"></div>
<div class="t" style="left:267px;top:429.85px;font-size:11.0px;transform:scaleX(0.927);transform-origin:0 0">Mhz</div>
<div style="left:414px;top:427px;width:1px;height:18px;background:#000"></div>
<div class="t" style="left:342px;top:429.85px;font-size:11.0px;transform:scaleX(0.927);transform-origin:0 0">24-bit</div>
<div style="left:490px;top:427px;width:1px;height:18px;background:#000"></div>
<div class="t" style="left:418px;top:429.85px;font-size:11.0px;transform:scaleX(0.927);transform-origin:0 0">0xA472</div>
<div style="left:565px;top:427px;width:1px;height:18px;background:#000"></div>
<div style="left:492px;top:428px;width:72px;height:15px;background:#90EE90"></div>
<div class="t" style="left:494px;top:429.85px;font-size:11.0px;transform:scaleX(0.927);transform-origin:0 0">900</div>
<div style="left:31px;top:445px;width:6px;height:17px;background:#F0F0F0;border-bottom:1px solid #E4E4E4;box-sizing:border-box"></div>
<div style="left:37px;top:445px;width:529px;height:17px;background:#F0FFFF;border-bottom:1px solid #000;box-sizing:border-box"></div>
<div style="left:112px;top:445px;width:1px;height:17px;background:#000"></div>
<div class="t" style="left:40px;top:447.85px;font-size:11.0px;transform:scaleX(0.927);transform-origin:0 0">1</div>
<div style="left:187px;top:445px;width:1px;height:17px;background:#000"></div>
<div class="t" style="left:116px;top:447.85px;font-size:11.0px;transform:scaleX(0.927);transform-origin:0 0">0xA474</div>
<div style="left:263px;top:445px;width:1px;height:17px;background:#000"></div>
<div style="left:189px;top:446px;width:73px;height:14px;background:#90EE90"></div>
<div class="t" style="left:191px;top:447.85px;font-size:11.0px;transform:scaleX(0.927);transform-origin:0 0">525</div>
<div style="left:338px;top:445px;width:1px;height:17px;background:#000"></div>
<div class="t" style="left:267px;top:447.85px;font-size:11.0px;transform:scaleX(0.927);transform-origin:0 0">Mhz</div>
<div style="left:414px;top:445px;width:1px;height:17px;background:#000"></div>
<div class="t" style="left:342px;top:447.85px;font-size:11.0px;transform:scaleX(0.927);transform-origin:0 0">24-bit</div>
<div style="left:490px;top:445px;width:1px;height:17px;background:#000"></div>
<div class="t" style="left:418px;top:447.85px;font-size:11.0px;transform:scaleX(0.927);transform-origin:0 0">0xA477</div>
<div style="left:565px;top:445px;width:1px;height:17px;background:#000"></div>
<div style="left:492px;top:446px;width:72px;height:14px;background:#90EE90"></div>
<div class="t" style="left:494px;top:447.85px;font-size:11.0px;transform:scaleX(0.927);transform-origin:0 0">968</div>
<div style="left:31px;top:462px;width:6px;height:18px;background:#F0F0F0;border-bottom:1px solid #E4E4E4;box-sizing:border-box"></div>
<div style="left:37px;top:462px;width:529px;height:18px;background:#FFFFFF;border-bottom:1px solid #000;box-sizing:border-box"></div>
<div style="left:112px;top:462px;width:1px;height:18px;background:#000"></div>
<div class="t" style="left:40px;top:464.85px;font-size:11.0px;transform:scaleX(0.927);transform-origin:0 0">2</div>
<div style="left:187px;top:462px;width:1px;height:18px;background:#000"></div>
<div class="t" style="left:116px;top:464.85px;font-size:11.0px;transform:scaleX(0.927);transform-origin:0 0">0xA479</div>
<div style="left:263px;top:462px;width:1px;height:18px;background:#000"></div>
<div style="left:189px;top:463px;width:73px;height:15px;background:#90EE90"></div>
<div class="t" style="left:191px;top:464.85px;font-size:11.0px;transform:scaleX(0.927);transform-origin:0 0">760</div>
<div style="left:338px;top:462px;width:1px;height:18px;background:#000"></div>
<div class="t" style="left:267px;top:464.85px;font-size:11.0px;transform:scaleX(0.927);transform-origin:0 0">Mhz</div>
<div style="left:414px;top:462px;width:1px;height:18px;background:#000"></div>
<div class="t" style="left:342px;top:464.85px;font-size:11.0px;transform:scaleX(0.927);transform-origin:0 0">24-bit</div>
<div style="left:490px;top:462px;width:1px;height:18px;background:#000"></div>
<div class="t" style="left:418px;top:464.85px;font-size:11.0px;transform:scaleX(0.927);transform-origin:0 0">0xA47C</div>
<div style="left:565px;top:462px;width:1px;height:18px;background:#000"></div>
<div style="left:492px;top:463px;width:72px;height:15px;background:#90EE90"></div>
<div class="t" style="left:494px;top:464.85px;font-size:11.0px;transform:scaleX(0.927);transform-origin:0 0">987</div>
<div style="left:31px;top:480px;width:6px;height:17px;background:#F0F0F0;border-bottom:1px solid #E4E4E4;box-sizing:border-box"></div>
<div style="left:37px;top:480px;width:529px;height:17px;background:#F0FFFF;border-bottom:1px solid #000;box-sizing:border-box"></div>
<div style="left:112px;top:480px;width:1px;height:17px;background:#000"></div>
<div class="t" style="left:40px;top:482.85px;font-size:11.0px;transform:scaleX(0.927);transform-origin:0 0">3</div>
<div style="left:187px;top:480px;width:1px;height:17px;background:#000"></div>
<div class="t" style="left:116px;top:482.85px;font-size:11.0px;transform:scaleX(0.927);transform-origin:0 0">0xA47E</div>
<div style="left:263px;top:480px;width:1px;height:17px;background:#000"></div>
<div style="left:189px;top:481px;width:73px;height:14px;background:#90EE90"></div>
<div class="t" style="left:191px;top:482.85px;font-size:11.0px;transform:scaleX(0.927);transform-origin:0 0">925</div>
<div style="left:338px;top:480px;width:1px;height:17px;background:#000"></div>
<div class="t" style="left:267px;top:482.85px;font-size:11.0px;transform:scaleX(0.927);transform-origin:0 0">Mhz</div>
<div style="left:414px;top:480px;width:1px;height:17px;background:#000"></div>
<div class="t" style="left:342px;top:482.85px;font-size:11.0px;transform:scaleX(0.927);transform-origin:0 0">24-bit</div>
<div style="left:490px;top:480px;width:1px;height:17px;background:#000"></div>
<div class="t" style="left:418px;top:482.85px;font-size:11.0px;transform:scaleX(0.927);transform-origin:0 0">0xA481</div>
<div style="left:565px;top:480px;width:1px;height:17px;background:#000"></div>
<div style="left:492px;top:481px;width:72px;height:14px;background:#90EE90"></div>
<div class="t" style="left:494px;top:482.85px;font-size:11.0px;transform:scaleX(0.927);transform-origin:0 0">1193</div>
<div style="left:31px;top:497px;width:6px;height:18px;background:#F0F0F0;border-bottom:1px solid #E4E4E4;box-sizing:border-box"></div>
<div style="left:37px;top:497px;width:529px;height:18px;background:#FFFFFF;border-bottom:1px solid #000;box-sizing:border-box"></div>
<div style="left:112px;top:497px;width:1px;height:18px;background:#000"></div>
<div class="t" style="left:40px;top:499.85px;font-size:11.0px;transform:scaleX(0.927);transform-origin:0 0">4</div>
<div style="left:187px;top:497px;width:1px;height:18px;background:#000"></div>
<div class="t" style="left:116px;top:499.85px;font-size:11.0px;transform:scaleX(0.927);transform-origin:0 0">0xA483</div>
<div style="left:263px;top:497px;width:1px;height:18px;background:#000"></div>
<div style="left:189px;top:498px;width:73px;height:15px;background:#90EE90"></div>
<div class="t" style="left:191px;top:499.85px;font-size:11.0px;transform:scaleX(0.927);transform-origin:0 0">965</div>
<div style="left:338px;top:497px;width:1px;height:18px;background:#000"></div>
<div class="t" style="left:267px;top:499.85px;font-size:11.0px;transform:scaleX(0.927);transform-origin:0 0">Mhz</div>
<div style="left:414px;top:497px;width:1px;height:18px;background:#000"></div>
<div class="t" style="left:342px;top:499.85px;font-size:11.0px;transform:scaleX(0.927);transform-origin:0 0">24-bit</div>
<div style="left:490px;top:497px;width:1px;height:18px;background:#000"></div>
<div class="t" style="left:418px;top:499.85px;font-size:11.0px;transform:scaleX(0.927);transform-origin:0 0">0xA486</div>
<div style="left:565px;top:497px;width:1px;height:18px;background:#000"></div>
<div style="left:492px;top:498px;width:72px;height:15px;background:#90EE90"></div>
<div class="t" style="left:494px;top:499.85px;font-size:11.0px;transform:scaleX(0.927);transform-origin:0 0">1212</div>
<div style="left:31px;top:515px;width:6px;height:17px;background:#F0F0F0;border-bottom:1px solid #E4E4E4;box-sizing:border-box"></div>
<div style="left:37px;top:515px;width:529px;height:17px;background:#F0FFFF;border-bottom:1px solid #000;box-sizing:border-box"></div>
<div style="left:112px;top:515px;width:1px;height:17px;background:#000"></div>
<div class="t" style="left:40px;top:517.85px;font-size:11.0px;transform:scaleX(0.927);transform-origin:0 0">5</div>
<div style="left:187px;top:515px;width:1px;height:17px;background:#000"></div>
<div class="t" style="left:116px;top:517.85px;font-size:11.0px;transform:scaleX(0.927);transform-origin:0 0">0xA488</div>
<div style="left:263px;top:515px;width:1px;height:17px;background:#000"></div>
<div style="left:189px;top:516px;width:73px;height:14px;background:#90EE90"></div>
<div class="t" style="left:191px;top:517.85px;font-size:11.0px;transform:scaleX(0.927);transform-origin:0 0">1020</div>
<div style="left:338px;top:515px;width:1px;height:17px;background:#000"></div>
<div class="t" style="left:267px;top:517.85px;font-size:11.0px;transform:scaleX(0.927);transform-origin:0 0">Mhz</div>
<div style="left:414px;top:515px;width:1px;height:17px;background:#000"></div>
<div class="t" style="left:342px;top:517.85px;font-size:11.0px;transform:scaleX(0.927);transform-origin:0 0">24-bit</div>
<div style="left:490px;top:515px;width:1px;height:17px;background:#000"></div>
<div class="t" style="left:418px;top:517.85px;font-size:11.0px;transform:scaleX(0.927);transform-origin:0 0">0xA48B</div>
<div style="left:565px;top:515px;width:1px;height:17px;background:#000"></div>
<div style="left:492px;top:516px;width:72px;height:14px;background:#90EE90"></div>
<div class="t" style="left:494px;top:517.85px;font-size:11.0px;transform:scaleX(0.927);transform-origin:0 0">1225</div>
<div style="left:31px;top:532px;width:6px;height:18px;background:#F0F0F0;border-bottom:1px solid #E4E4E4;box-sizing:border-box"></div>
<div style="left:37px;top:532px;width:529px;height:18px;background:#FFFFFF;border-bottom:1px solid #000;box-sizing:border-box"></div>
<div style="left:112px;top:532px;width:1px;height:18px;background:#000"></div>
<div class="t" style="left:40px;top:534.85px;font-size:11.0px;transform:scaleX(0.927);transform-origin:0 0">6</div>
<div style="left:187px;top:532px;width:1px;height:18px;background:#000"></div>
<div class="t" style="left:116px;top:534.85px;font-size:11.0px;transform:scaleX(0.927);transform-origin:0 0">0xA48D</div>
<div style="left:263px;top:532px;width:1px;height:18px;background:#000"></div>
<div style="left:189px;top:533px;width:73px;height:15px;background:#90EE90"></div>
<div class="t" style="left:191px;top:534.85px;font-size:11.0px;transform:scaleX(0.927);transform-origin:0 0">1060</div>
<div style="left:338px;top:532px;width:1px;height:18px;background:#000"></div>
<div class="t" style="left:267px;top:534.85px;font-size:11.0px;transform:scaleX(0.927);transform-origin:0 0">Mhz</div>
<div style="left:414px;top:532px;width:1px;height:18px;background:#000"></div>
<div class="t" style="left:342px;top:534.85px;font-size:11.0px;transform:scaleX(0.927);transform-origin:0 0">24-bit</div>
<div style="left:490px;top:532px;width:1px;height:18px;background:#000"></div>
<div class="t" style="left:418px;top:534.85px;font-size:11.0px;transform:scaleX(0.927);transform-origin:0 0">0xA490</div>
<div style="left:565px;top:532px;width:1px;height:18px;background:#000"></div>
<div style="left:492px;top:533px;width:72px;height:15px;background:#90EE90"></div>
<div class="t" style="left:494px;top:534.85px;font-size:11.0px;transform:scaleX(0.927);transform-origin:0 0">1231</div>
<div style="left:31px;top:550px;width:6px;height:18px;background:#F0F0F0;border-bottom:1px solid #E4E4E4;box-sizing:border-box"></div>
<div style="left:37px;top:550px;width:529px;height:18px;background:#F0FFFF;border-bottom:1px solid #000;box-sizing:border-box"></div>
<div style="left:112px;top:550px;width:1px;height:18px;background:#000"></div>
<div class="t" style="left:40px;top:552.85px;font-size:11.0px;transform:scaleX(0.927);transform-origin:0 0">7</div>
<div style="left:187px;top:550px;width:1px;height:18px;background:#000"></div>
<div class="t" style="left:116px;top:552.85px;font-size:11.0px;transform:scaleX(0.927);transform-origin:0 0">0xA492</div>
<div style="left:263px;top:550px;width:1px;height:18px;background:#000"></div>
<div style="left:189px;top:551px;width:73px;height:15px;background:#90EE90"></div>
<div class="t" style="left:191px;top:552.85px;font-size:11.0px;transform:scaleX(0.927);transform-origin:0 0">1100</div>
<div style="left:338px;top:550px;width:1px;height:18px;background:#000"></div>
<div class="t" style="left:267px;top:552.85px;font-size:11.0px;transform:scaleX(0.927);transform-origin:0 0">Mhz</div>
<div style="left:414px;top:550px;width:1px;height:18px;background:#000"></div>
<div class="t" style="left:342px;top:552.85px;font-size:11.0px;transform:scaleX(0.927);transform-origin:0 0">24-bit</div>
<div style="left:490px;top:550px;width:1px;height:18px;background:#000"></div>
<div class="t" style="left:418px;top:552.85px;font-size:11.0px;transform:scaleX(0.927);transform-origin:0 0">0xA495</div>
<div style="left:565px;top:550px;width:1px;height:18px;background:#000"></div>
<div style="left:492px;top:551px;width:72px;height:15px;background:#90EE90"></div>
<div class="t" style="left:494px;top:552.85px;font-size:11.0px;transform:scaleX(0.927);transform-origin:0 0">1243</div>
<div class="t" style="left:30.6px;top:585.87px;font-size:12.4px;color:#000;transform:scaleX(0.927);transform-origin:0 0;">MEM Freq Table (voltage edit):</div>
<div style="left:30px;top:604px;width:538px;height:180px;border:1px solid #688CAF;box-sizing:border-box;background:#F0F0F0"></div>
<div style="left:31px;top:605px;width:6px;height:22px;background:#EFEFEF;border-bottom:1px solid #E4E4E4;box-sizing:border-box"></div>
<div style="left:37px;top:605px;width:76px;height:22px;background:linear-gradient(#FFFFFF 0%,#FFFFFF 38%,#F4F5F7 44%,#F0F1F3 100%);border-right:1px solid #E2E3E5;border-bottom:1px solid #DADBDD;box-sizing:border-box;overflow:hidden"></div>
<div style="left:113px;top:605px;width:76px;height:22px;background:linear-gradient(#FFFFFF 0%,#FFFFFF 38%,#F4F5F7 44%,#F0F1F3 100%);border-right:1px solid #E2E3E5;border-bottom:1px solid #DADBDD;box-sizing:border-box;overflow:hidden"></div>
<div style="left:189px;top:605px;width:75px;height:22px;background:linear-gradient(#FFFFFF 0%,#FFFFFF 38%,#F4F5F7 44%,#F0F1F3 100%);border-right:1px solid #E2E3E5;border-bottom:1px solid #DADBDD;box-sizing:border-box;overflow:hidden"></div>
<div style="left:264px;top:605px;width:76px;height:22px;background:linear-gradient(#FFFFFF 0%,#FFFFFF 38%,#F4F5F7 44%,#F0F1F3 100%);border-right:1px solid #E2E3E5;border-bottom:1px solid #DADBDD;box-sizing:border-box;overflow:hidden"></div>
<div style="left:340px;top:605px;width:75px;height:22px;background:linear-gradient(#FFFFFF 0%,#FFFFFF 38%,#F4F5F7 44%,#F0F1F3 100%);border-right:1px solid #E2E3E5;border-bottom:1px solid #DADBDD;box-sizing:border-box;overflow:hidden"></div>
<div style="left:415px;top:605px;width:76px;height:22px;background:linear-gradient(#FFFFFF 0%,#FFFFFF 38%,#F4F5F7 44%,#F0F1F3 100%);border-right:1px solid #E2E3E5;border-bottom:1px solid #DADBDD;box-sizing:border-box;overflow:hidden"></div>
<div style="left:491px;top:605px;width:75px;height:22px;background:linear-gradient(#FFFFFF 0%,#FFFFFF 38%,#F4F5F7 44%,#F0F1F3 100%);border-right:1px solid #E2E3E5;border-bottom:1px solid #DADBDD;box-sizing:border-box;overflow:hidden"></div>
<div style="left:37px;top:605px;width:75px;height:22px;overflow:hidden">
<div class="t" style="left:5px;top:5.40px;font-size:11.3px;transform:scaleX(0.93);transform-origin:0 0">DPM</div></div>
<div style="left:113px;top:605px;width:75px;height:22px;overflow:hidden">
<div class="t" style="left:5px;top:5.40px;font-size:11.3px;transform:scaleX(0.93);transform-origin:0 0">Address</div></div>
<div style="left:189px;top:605px;width:74px;height:22px;overflow:hidden">
<div class="t" style="left:5px;top:5.40px;font-size:11.3px;transform:scaleX(0.93);transform-origin:0 0">Value</div></div>
<div style="left:264px;top:605px;width:75px;height:22px;overflow:hidden">
<div class="t" style="left:5px;top:5.40px;font-size:11.3px;transform:scaleX(0.93);transform-origin:0 0">Units</div></div>
<div style="left:340px;top:605px;width:74px;height:22px;overflow:hidden">
<div class="t" style="left:5px;top:5.40px;font-size:11.3px;transform:scaleX(0.93);transform-origin:0 0">Length</div></div>
<div style="left:415px;top:605px;width:75px;height:22px;overflow:hidden">
<div class="t" style="left:5px;top:5.40px;font-size:11.3px;transform:scaleX(0.93);transform-origin:0 0">AdrVoltage</div></div>
<div style="left:491px;top:605px;width:74px;height:22px;overflow:hidden">
<div class="t" style="left:5px;top:5.40px;font-size:11.3px;transform:scaleX(0.93);transform-origin:0 0">Voltage</div></div>
<div style="left:31px;top:627px;width:6px;height:17px;background:#F0F0F0;border-bottom:1px solid #E4E4E4;box-sizing:border-box"></div>
<div style="left:37px;top:627px;width:529px;height:17px;background:#FFFFFF;border-bottom:1px solid #000;box-sizing:border-box"></div>
<div style="left:112px;top:627px;width:1px;height:17px;background:#000"></div>
<div class="t" style="left:40px;top:629.80px;font-size:11.0px;transform:scaleX(0.927);transform-origin:0 0">0</div>
<div style="left:188px;top:627px;width:1px;height:17px;background:#000"></div>
<div class="t" style="left:116px;top:629.80px;font-size:11.0px;transform:scaleX(0.927);transform-origin:0 0">0xA49E</div>
<div style="left:263px;top:627px;width:1px;height:17px;background:#000"></div>
<div style="left:190px;top:628px;width:72px;height:14px;background:#90EE90"></div>
<div class="t" style="left:192px;top:629.80px;font-size:11.0px;transform:scaleX(0.927);transform-origin:0 0">150</div>
<div style="left:339px;top:627px;width:1px;height:17px;background:#000"></div>
<div class="t" style="left:267px;top:629.80px;font-size:11.0px;transform:scaleX(0.927);transform-origin:0 0">Mhz</div>
<div style="left:414px;top:627px;width:1px;height:17px;background:#000"></div>
<div class="t" style="left:343px;top:629.80px;font-size:11.0px;transform:scaleX(0.927);transform-origin:0 0">24-bit</div>
<div style="left:490px;top:627px;width:1px;height:17px;background:#000"></div>
<div class="t" style="left:418px;top:629.80px;font-size:11.0px;transform:scaleX(0.927);transform-origin:0 0">0xA4A1</div>
<div style="left:565px;top:627px;width:1px;height:17px;background:#000"></div>
<div style="left:492px;top:628px;width:72px;height:14px;background:#90EE90"></div>
<div class="t" style="left:494px;top:629.80px;font-size:11.0px;transform:scaleX(0.927);transform-origin:0 0">900</div>
<div style="left:31px;top:644px;width:6px;height:18px;background:#F0F0F0;border-bottom:1px solid #E4E4E4;box-sizing:border-box"></div>
<div style="left:37px;top:644px;width:529px;height:18px;background:#F0FFFF;border-bottom:1px solid #000;box-sizing:border-box"></div>
<div style="left:112px;top:644px;width:1px;height:18px;background:#000"></div>
<div class="t" style="left:40px;top:646.80px;font-size:11.0px;transform:scaleX(0.927);transform-origin:0 0">1</div>
<div style="left:188px;top:644px;width:1px;height:18px;background:#000"></div>
<div class="t" style="left:116px;top:646.80px;font-size:11.0px;transform:scaleX(0.927);transform-origin:0 0">0xA4A3</div>
<div style="left:263px;top:644px;width:1px;height:18px;background:#000"></div>
<div style="left:190px;top:646px;width:72px;height:14px;background:#90EE90"></div>
<div class="t" style="left:192px;top:646.80px;font-size:11.0px;transform:scaleX(0.927);transform-origin:0 0">150</div>
<div style="left:339px;top:644px;width:1px;height:18px;background:#000"></div>
<div class="t" style="left:267px;top:646.80px;font-size:11.0px;transform:scaleX(0.927);transform-origin:0 0">Mhz</div>
<div style="left:414px;top:644px;width:1px;height:18px;background:#000"></div>
<div class="t" style="left:343px;top:646.80px;font-size:11.0px;transform:scaleX(0.927);transform-origin:0 0">24-bit</div>
<div style="left:490px;top:644px;width:1px;height:18px;background:#000"></div>
<div class="t" style="left:418px;top:646.80px;font-size:11.0px;transform:scaleX(0.927);transform-origin:0 0">0xA4A6</div>
<div style="left:565px;top:644px;width:1px;height:18px;background:#000"></div>
<div style="left:492px;top:646px;width:72px;height:14px;background:#90EE90"></div>
<div class="t" style="left:494px;top:646.80px;font-size:11.0px;transform:scaleX(0.927);transform-origin:0 0">968</div>
<div style="left:31px;top:662px;width:6px;height:18px;background:#F0F0F0;border-bottom:1px solid #E4E4E4;box-sizing:border-box"></div>
<div style="left:37px;top:662px;width:529px;height:18px;background:#FFFFFF;border-bottom:1px solid #000;box-sizing:border-box"></div>
<div style="left:112px;top:662px;width:1px;height:18px;background:#000"></div>
<div class="t" style="left:40px;top:664.80px;font-size:11.0px;transform:scaleX(0.927);transform-origin:0 0">2</div>
<div style="left:188px;top:662px;width:1px;height:18px;background:#000"></div>
<div class="t" style="left:116px;top:664.80px;font-size:11.0px;transform:scaleX(0.927);transform-origin:0 0">0xA4A8</div>
<div style="left:263px;top:662px;width:1px;height:18px;background:#000"></div>
<div style="left:190px;top:663px;width:72px;height:15px;background:#90EE90"></div>
<div class="t" style="left:192px;top:664.80px;font-size:11.0px;transform:scaleX(0.927);transform-origin:0 0">150</div>
<div style="left:339px;top:662px;width:1px;height:18px;background:#000"></div>
<div class="t" style="left:267px;top:664.80px;font-size:11.0px;transform:scaleX(0.927);transform-origin:0 0">Mhz</div>
<div style="left:414px;top:662px;width:1px;height:18px;background:#000"></div>
<div class="t" style="left:343px;top:664.80px;font-size:11.0px;transform:scaleX(0.927);transform-origin:0 0">24-bit</div>
<div style="left:490px;top:662px;width:1px;height:18px;background:#000"></div>
<div class="t" style="left:418px;top:664.80px;font-size:11.0px;transform:scaleX(0.927);transform-origin:0 0">0xA4AB</div>
<div style="left:565px;top:662px;width:1px;height:18px;background:#000"></div>
<div style="left:492px;top:663px;width:72px;height:15px;background:#90EE90"></div>
<div class="t" style="left:494px;top:664.80px;font-size:11.0px;transform:scaleX(0.927);transform-origin:0 0">987</div>
<div style="left:31px;top:680px;width:6px;height:17px;background:#F0F0F0;border-bottom:1px solid #E4E4E4;box-sizing:border-box"></div>
<div style="left:37px;top:680px;width:529px;height:17px;background:#F0FFFF;border-bottom:1px solid #000;box-sizing:border-box"></div>
<div style="left:112px;top:680px;width:1px;height:17px;background:#000"></div>
<div class="t" style="left:40px;top:682.80px;font-size:11.0px;transform:scaleX(0.927);transform-origin:0 0">3</div>
<div style="left:188px;top:680px;width:1px;height:17px;background:#000"></div>
<div class="t" style="left:116px;top:682.80px;font-size:11.0px;transform:scaleX(0.927);transform-origin:0 0">0xA4AD</div>
<div style="left:263px;top:680px;width:1px;height:17px;background:#000"></div>
<div style="left:190px;top:680px;width:72px;height:15px;background:#90EE90"></div>
<div class="t" style="left:192px;top:682.80px;font-size:11.0px;transform:scaleX(0.927);transform-origin:0 0">1500</div>
<div style="left:339px;top:680px;width:1px;height:17px;background:#000"></div>
<div class="t" style="left:267px;top:682.80px;font-size:11.0px;transform:scaleX(0.927);transform-origin:0 0">Mhz</div>
<div style="left:414px;top:680px;width:1px;height:17px;background:#000"></div>
<div class="t" style="left:343px;top:682.80px;font-size:11.0px;transform:scaleX(0.927);transform-origin:0 0">24-bit</div>
<div style="left:490px;top:680px;width:1px;height:17px;background:#000"></div>
<div class="t" style="left:418px;top:682.80px;font-size:11.0px;transform:scaleX(0.927);transform-origin:0 0">0xA4B0</div>
<div style="left:565px;top:680px;width:1px;height:17px;background:#000"></div>
<div style="left:492px;top:680px;width:72px;height:15px;background:#90EE90"></div>
<div class="t" style="left:494px;top:682.80px;font-size:11.0px;transform:scaleX(0.927);transform-origin:0 0">1193</div>
<div style="left:31px;top:697px;width:6px;height:17px;background:#F0F0F0;border-bottom:1px solid #E4E4E4;box-sizing:border-box"></div>
<div style="left:37px;top:697px;width:529px;height:17px;background:#FFFFFF;border-bottom:1px solid #000;box-sizing:border-box"></div>
<div style="left:112px;top:697px;width:1px;height:17px;background:#000"></div>
<div class="t" style="left:40px;top:699.80px;font-size:11.0px;transform:scaleX(0.927);transform-origin:0 0">4</div>
<div style="left:188px;top:697px;width:1px;height:17px;background:#000"></div>
<div class="t" style="left:116px;top:699.80px;font-size:11.0px;transform:scaleX(0.927);transform-origin:0 0">0xA4B2</div>
<div style="left:263px;top:697px;width:1px;height:17px;background:#000"></div>
<div style="left:190px;top:698px;width:72px;height:14px;background:#90EE90"></div>
<div class="t" style="left:192px;top:699.80px;font-size:11.0px;transform:scaleX(0.927);transform-origin:0 0">1500</div>
<div style="left:339px;top:697px;width:1px;height:17px;background:#000"></div>
<div class="t" style="left:267px;top:699.80px;font-size:11.0px;transform:scaleX(0.927);transform-origin:0 0">Mhz</div>
<div style="left:414px;top:697px;width:1px;height:17px;background:#000"></div>
<div class="t" style="left:343px;top:699.80px;font-size:11.0px;transform:scaleX(0.927);transform-origin:0 0">24-bit</div>
<div style="left:490px;top:697px;width:1px;height:17px;background:#000"></div>
<div class="t" style="left:418px;top:699.80px;font-size:11.0px;transform:scaleX(0.927);transform-origin:0 0">0xA4B5</div>
<div style="left:565px;top:697px;width:1px;height:17px;background:#000"></div>
<div style="left:492px;top:698px;width:72px;height:14px;background:#90EE90"></div>
<div class="t" style="left:494px;top:699.80px;font-size:11.0px;transform:scaleX(0.927);transform-origin:0 0">1212</div>
<div style="left:31px;top:714px;width:6px;height:18px;background:#F0F0F0;border-bottom:1px solid #E4E4E4;box-sizing:border-box"></div>
<div style="left:37px;top:714px;width:529px;height:18px;background:#F0FFFF;border-bottom:1px solid #000;box-sizing:border-box"></div>
<div style="left:112px;top:714px;width:1px;height:18px;background:#000"></div>
<div class="t" style="left:40px;top:716.80px;font-size:11.0px;transform:scaleX(0.927);transform-origin:0 0">5</div>
<div style="left:188px;top:714px;width:1px;height:18px;background:#000"></div>
<div class="t" style="left:116px;top:716.80px;font-size:11.0px;transform:scaleX(0.927);transform-origin:0 0">0xA4B7</div>
<div style="left:263px;top:714px;width:1px;height:18px;background:#000"></div>
<div style="left:190px;top:716px;width:72px;height:14px;background:#90EE90"></div>
<div class="t" style="left:192px;top:716.80px;font-size:11.0px;transform:scaleX(0.927);transform-origin:0 0">1500</div>
<div style="left:339px;top:714px;width:1px;height:18px;background:#000"></div>
<div class="t" style="left:267px;top:716.80px;font-size:11.0px;transform:scaleX(0.927);transform-origin:0 0">Mhz</div>
<div style="left:414px;top:714px;width:1px;height:18px;background:#000"></div>
<div class="t" style="left:343px;top:716.80px;font-size:11.0px;transform:scaleX(0.927);transform-origin:0 0">24-bit</div>
<div style="left:490px;top:714px;width:1px;height:18px;background:#000"></div>
<div class="t" style="left:418px;top:716.80px;font-size:11.0px;transform:scaleX(0.927);transform-origin:0 0">0xA4BA</div>
<div style="left:565px;top:714px;width:1px;height:18px;background:#000"></div>
<div style="left:492px;top:716px;width:72px;height:14px;background:#90EE90"></div>
<div class="t" style="left:494px;top:716.80px;font-size:11.0px;transform:scaleX(0.927);transform-origin:0 0">1225</div>
<div style="left:31px;top:732px;width:6px;height:18px;background:#F0F0F0;border-bottom:1px solid #E4E4E4;box-sizing:border-box"></div>
<div style="left:37px;top:732px;width:529px;height:18px;background:#FFFFFF;border-bottom:1px solid #000;box-sizing:border-box"></div>
<div style="left:112px;top:732px;width:1px;height:18px;background:#000"></div>
<div class="t" style="left:40px;top:734.80px;font-size:11.0px;transform:scaleX(0.927);transform-origin:0 0">6</div>
<div style="left:188px;top:732px;width:1px;height:18px;background:#000"></div>
<div class="t" style="left:116px;top:734.80px;font-size:11.0px;transform:scaleX(0.927);transform-origin:0 0">0xA4BC</div>
<div style="left:263px;top:732px;width:1px;height:18px;background:#000"></div>
<div style="left:190px;top:733px;width:72px;height:15px;background:#90EE90"></div>
<div class="t" style="left:192px;top:734.80px;font-size:11.0px;transform:scaleX(0.927);transform-origin:0 0">1600</div>
<div style="left:339px;top:732px;width:1px;height:18px;background:#000"></div>
<div class="t" style="left:267px;top:734.80px;font-size:11.0px;transform:scaleX(0.927);transform-origin:0 0">Mhz</div>
<div style="left:414px;top:732px;width:1px;height:18px;background:#000"></div>
<div class="t" style="left:343px;top:734.80px;font-size:11.0px;transform:scaleX(0.927);transform-origin:0 0">24-bit</div>
<div style="left:490px;top:732px;width:1px;height:18px;background:#000"></div>
<div class="t" style="left:418px;top:734.80px;font-size:11.0px;transform:scaleX(0.927);transform-origin:0 0">0xA4BF</div>
<div style="left:565px;top:732px;width:1px;height:18px;background:#000"></div>
<div style="left:492px;top:733px;width:72px;height:15px;background:#90EE90"></div>
<div class="t" style="left:494px;top:734.80px;font-size:11.0px;transform:scaleX(0.927);transform-origin:0 0">1231</div>
<div style="left:31px;top:750px;width:6px;height:17px;background:#F0F0F0;border-bottom:1px solid #E4E4E4;box-sizing:border-box"></div>
<div style="left:37px;top:750px;width:529px;height:17px;background:#F0FFFF;border-bottom:1px solid #000;box-sizing:border-box"></div>
<div style="left:112px;top:750px;width:1px;height:17px;background:#000"></div>
<div class="t" style="left:40px;top:752.80px;font-size:11.0px;transform:scaleX(0.927);transform-origin:0 0">7</div>
<div style="left:188px;top:750px;width:1px;height:17px;background:#000"></div>
<div class="t" style="left:116px;top:752.80px;font-size:11.0px;transform:scaleX(0.927);transform-origin:0 0">0xA4C1</div>
<div style="left:263px;top:750px;width:1px;height:17px;background:#000"></div>
<div style="left:190px;top:750px;width:72px;height:15px;background:#90EE90"></div>
<div class="t" style="left:192px;top:752.80px;font-size:11.0px;transform:scaleX(0.927);transform-origin:0 0">1625</div>
<div style="left:339px;top:750px;width:1px;height:17px;background:#000"></div>
<div class="t" style="left:267px;top:752.80px;font-size:11.0px;transform:scaleX(0.927);transform-origin:0 0">Mhz</div>
<div style="left:414px;top:750px;width:1px;height:17px;background:#000"></div>
<div class="t" style="left:343px;top:752.80px;font-size:11.0px;transform:scaleX(0.927);transform-origin:0 0">24-bit</div>
<div style="left:490px;top:750px;width:1px;height:17px;background:#000"></div>
<div class="t" style="left:418px;top:752.80px;font-size:11.0px;transform:scaleX(0.927);transform-origin:0 0">0xA4C4</div>
<div style="left:565px;top:750px;width:1px;height:17px;background:#000"></div>
<div style="left:492px;top:750px;width:72px;height:15px;background:#90EE90"></div>
<div class="t" style="left:494px;top:752.80px;font-size:11.0px;transform:scaleX(0.927);transform-origin:0 0">1243</div>
</body></html>
